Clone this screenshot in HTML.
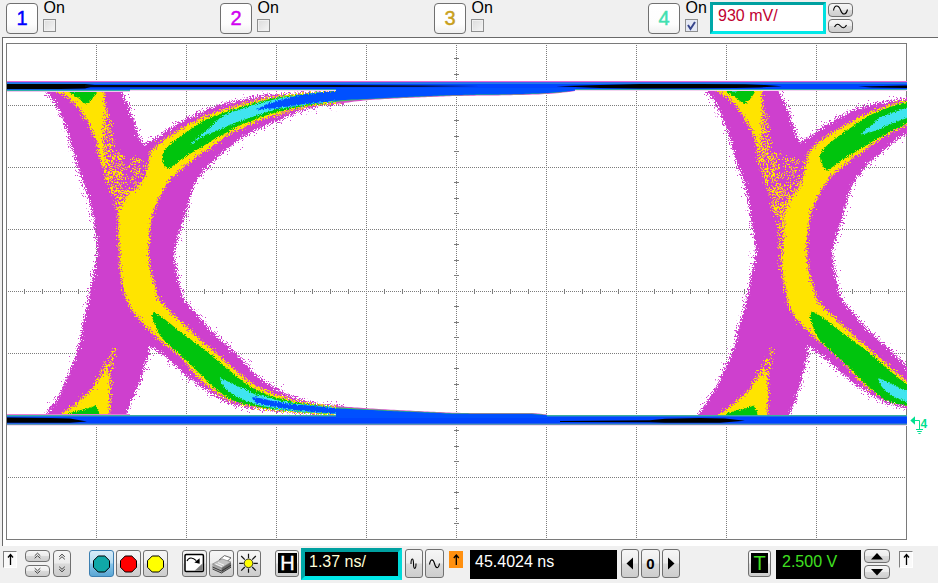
<!DOCTYPE html>
<html lang="en"><head><meta charset="utf-8">
<title>Oscilloscope eye diagram</title>
<style>
html,body{margin:0;padding:0;}
body{width:938px;height:583px;overflow:hidden;background:#f0f0f0;position:relative;
 font-family:"Liberation Sans",sans-serif;color:#000;}
.a{position:absolute;box-sizing:border-box;}
.btn{position:absolute;box-sizing:border-box;border:1px solid #707070;border-radius:3px;
 background:linear-gradient(#f6f6f6 0%,#ececec 48%,#dadada 52%,#cdcdcd 100%);}
.chb{position:absolute;box-sizing:border-box;border:1px solid #707070;border-radius:4px;
 background:linear-gradient(#ffffff 0%,#fdfdfd 70%,#f0f0f0 100%);
 font-size:20px;line-height:28px;text-align:center;width:32px;height:31px;top:3px;-webkit-text-stroke:0.45px currentColor;}
.on{position:absolute;top:-1px;font-size:16px;line-height:18px;}
.cb{position:absolute;box-sizing:border-box;top:19px;width:13px;height:13px;border:1px solid #8e8f8f;
 background:linear-gradient(135deg,#dcdcdc 0%,#e8e8e8 50%,#f6f6f6 100%);box-shadow:inset 0 0 0 1px #f0f0f0;}
.fld{position:absolute;box-sizing:border-box;font-size:16px;white-space:nowrap;}
.sunk{position:absolute;box-sizing:border-box;background:#fafafa;border-top:1px solid #808080;border-left:1px solid #808080;
 border-right:1px solid #fff;border-bottom:1px solid #fff;}
svg{position:absolute;overflow:visible;}
</style></head><body>
<div class="chb" style="left:6px;color:#0000ff">1</div>
<div class="on" style="left:43.5px">On</div>
<div class="cb" style="left:43px"></div>
<div class="chb" style="left:220px;color:#d000f0">2</div>
<div class="on" style="left:257.5px">On</div>
<div class="cb" style="left:257px"></div>
<div class="chb" style="left:434px;color:#c8a020">3</div>
<div class="on" style="left:471.5px">On</div>
<div class="cb" style="left:471px"></div>
<div class="chb" style="left:648px;color:#40e0b0">4</div>
<div class="on" style="left:685.5px">On</div>
<div class="cb" style="left:685px"></div>
<svg style="left:685px;top:19px" width="13" height="13" viewBox="0 0 13 13"><rect x="1" y="1" width="11" height="11" fill="#e4e8f4"/><path d="M3 6 L5.5 10 L10 3" fill="none" stroke="#36458c" stroke-width="2"/></svg>
<div class="fld" style="left:710px;top:2px;width:116px;height:32px;background:#fff;border:3px solid;border-color:#00a0a0 #00e0e0 #00e8e8 #00a8a8;color:#c00030;line-height:22px;padding-left:5px;">930 mV/</div>
<div class="btn" style="left:828px;top:3px;width:25px;height:14px;border-radius:4px"></div>
<div class="btn" style="left:828px;top:19px;width:25px;height:14px;border-radius:4px"></div>
<svg style="left:828px;top:3px" width="25" height="30" viewBox="0 0 25 30"><path d="M5.5 7.5 C6.5 1.5 10.5 1.5 12.5 7 C14.5 12.5 18 12.5 19.5 6.5" fill="none" stroke="#000" stroke-width="1.1"/><path d="M6.5 24 C8.5 20.5 10.5 20.5 12.5 23 C14.5 25.5 17 25.5 18.5 22" fill="none" stroke="#000" stroke-width="1.1"/></svg>
<div class="a" style="left:2px;top:37px;width:936px;height:509px;background:#fff;border-top:1px solid #696969;border-left:1px solid #696969"></div>
<svg style="left:0;top:0" width="938" height="583" viewBox="0 0 938 583"><defs><clipPath id="pc"><rect x="7" y="44" width="900" height="495"/></clipPath><clipPath id="pc2"><rect x="0" y="0" width="344" height="583"/><rect x="600" y="0" width="338" height="583"/></clipPath><filter id="sp" x="0" y="0" width="938" height="583" filterUnits="userSpaceOnUse"><feTurbulence type="fractalNoise" baseFrequency="0.85" numOctaves="1" seed="7" result="n"/><feDisplacementMap in="SourceGraphic" in2="n" scale="13" xChannelSelector="R" yChannelSelector="G"/></filter><filter id="sq" x="0" y="0" width="938" height="583" filterUnits="userSpaceOnUse"><feTurbulence type="fractalNoise" baseFrequency="0.85" numOctaves="1" seed="3" result="n"/><feDisplacementMap in="SourceGraphic" in2="n" scale="5" xChannelSelector="R" yChannelSelector="G"/></filter><filter id="sh" x="0" y="0" width="938" height="583" filterUnits="userSpaceOnUse"><feTurbulence type="fractalNoise" baseFrequency="0.85" numOctaves="1" seed="12" result="n"/><feDisplacementMap in="SourceGraphic" in2="n" scale="28" xChannelSelector="R" yChannelSelector="G"/></filter><pattern id="dy" width="16" height="16" patternUnits="userSpaceOnUse"><path d="M0 0h2v1h-2zM4 0h1v1h-1zM6 0h1v1h-1zM11 0h1v1h-1zM14 0h1v1h-1zM0 1h4v1h-4zM6 1h4v1h-4zM12 1h1v1h-1zM14 1h1v1h-1zM5 2h2v1h-2zM8 2h6v1h-6zM3 3h3v1h-3zM7 3h2v1h-2zM10 3h1v1h-1zM14 3h2v1h-2zM6 4h1v1h-1zM9 4h1v1h-1zM11 4h1v1h-1zM13 4h2v1h-2zM3 5h3v1h-3zM12 5h1v1h-1zM14 5h2v1h-2zM0 6h1v1h-1zM4 6h2v1h-2zM7 6h6v1h-6zM0 7h1v1h-1zM6 7h2v1h-2zM14 7h1v1h-1zM3 8h1v1h-1zM5 8h1v1h-1zM7 8h1v1h-1zM9 8h2v1h-2zM15 8h1v1h-1zM3 9h2v1h-2zM8 9h2v1h-2zM13 9h2v1h-2zM0 10h1v1h-1zM3 10h2v1h-2zM10 10h2v1h-2zM13 10h1v1h-1zM0 11h3v1h-3zM4 11h1v1h-1zM9 11h2v1h-2zM12 11h1v1h-1zM14 11h2v1h-2zM1 12h1v1h-1zM4 12h5v1h-5zM1 13h3v1h-3zM5 13h1v1h-1zM9 13h1v1h-1zM11 13h1v1h-1zM13 13h2v1h-2zM1 14h2v1h-2zM5 14h6v1h-6zM15 14h1v1h-1zM1 15h1v1h-1zM4 15h3v1h-3zM8 15h4v1h-4zM14 15h1v1h-1z" fill="#ffe400"/></pattern><pattern id="dz" width="16" height="16" patternUnits="userSpaceOnUse"><path d="M2 0h1v1h-1zM9 0h2v1h-2zM13 0h1v1h-1zM9 1h2v1h-2zM13 1h3v1h-3zM2 2h1v1h-1zM4 2h1v1h-1zM12 2h1v1h-1zM4 3h3v1h-3zM1 4h1v1h-1zM3 4h1v1h-1zM6 4h2v1h-2zM1 5h1v1h-1zM4 5h1v1h-1zM9 5h1v1h-1zM11 5h1v1h-1zM1 6h1v1h-1zM6 6h2v1h-2zM1 7h1v1h-1zM13 7h1v1h-1zM2 8h1v1h-1zM6 8h1v1h-1zM8 8h1v1h-1zM10 8h2v1h-2zM0 9h1v1h-1zM7 9h1v1h-1zM12 9h1v1h-1zM7 10h1v1h-1zM12 10h1v1h-1zM4 11h1v1h-1zM6 11h1v1h-1zM7 12h1v1h-1zM9 12h3v1h-3zM1 13h1v1h-1zM7 13h1v1h-1zM11 13h2v1h-2zM1 14h1v1h-1zM3 14h2v1h-2zM6 14h1v1h-1zM8 14h1v1h-1zM4 15h1v1h-1zM7 15h2v1h-2zM11 15h1v1h-1z" fill="#ffe400"/></pattern><pattern id="dm" width="16" height="16" patternUnits="userSpaceOnUse"><path d="M0 0h1v1h-1zM3 0h3v1h-3zM7 0h2v1h-2zM10 0h1v1h-1zM13 0h1v1h-1zM11 1h1v1h-1zM1 2h2v1h-2zM13 2h1v1h-1zM1 3h1v1h-1zM5 3h3v1h-3zM9 3h2v1h-2zM15 3h1v1h-1zM1 4h1v1h-1zM3 4h1v1h-1zM8 4h3v1h-3zM4 5h2v1h-2zM8 5h2v1h-2zM11 5h2v1h-2zM15 5h1v1h-1zM1 6h1v1h-1zM4 6h2v1h-2zM8 6h2v1h-2zM12 6h1v1h-1zM4 7h1v1h-1zM8 7h1v1h-1zM12 7h1v1h-1zM14 8h1v1h-1zM2 9h1v1h-1zM4 9h1v1h-1zM9 9h1v1h-1zM11 9h1v1h-1zM3 10h2v1h-2zM9 10h1v1h-1zM13 10h1v1h-1zM3 11h1v1h-1zM5 11h1v1h-1zM7 11h1v1h-1zM11 11h1v1h-1zM3 12h1v1h-1zM6 12h2v1h-2zM9 12h2v1h-2zM14 12h1v1h-1zM0 13h1v1h-1zM3 13h1v1h-1zM6 13h2v1h-2zM14 13h2v1h-2zM1 14h1v1h-1zM3 14h1v1h-1zM6 14h1v1h-1zM12 14h4v1h-4zM0 15h2v1h-2zM3 15h1v1h-1zM7 15h1v1h-1zM9 15h1v1h-1zM12 15h1v1h-1zM14 15h1v1h-1z" fill="#ce40ce"/></pattern></defs><g stroke="#7c7c7c" stroke-width="1" shape-rendering="crispEdges" fill="none"><path d="M96.5 45V539M186.5 45V539M276.5 45V539M366.5 45V539M456.5 45V539M546.5 45V539M636.5 45V539M726.5 45V539M816.5 45V539M8 105.5H906M8 167.5H906M8 229.5H906M8 291.5H906M8 353.5H906M8 415.5H906M8 477.5H906" stroke-dasharray="1 1"/><path d="M24.5 289V294M42.5 289V294M60.5 289V294M78.5 289V294M114.5 289V294M132.5 289V294M150.5 289V294M168.5 289V294M204.5 289V294M222.5 289V294M240.5 289V294M258.5 289V294M294.5 289V294M312.5 289V294M330.5 289V294M348.5 289V294M384.5 289V294M402.5 289V294M420.5 289V294M438.5 289V294M474.5 289V294M492.5 289V294M510.5 289V294M528.5 289V294M564.5 289V294M582.5 289V294M600.5 289V294M618.5 289V294M654.5 289V294M672.5 289V294M690.5 289V294M708.5 289V294M744.5 289V294M762.5 289V294M780.5 289V294M798.5 289V294M834.5 289V294M852.5 289V294M870.5 289V294M888.5 289V294M454 58.5H459M454 74.5H459M454 89.5H459M454 120.5H459M454 136.5H459M454 151.5H459M454 182.5H459M454 198.5H459M454 213.5H459M454 244.5H459M454 260.5H459M454 275.5H459M454 306.5H459M454 322.5H459M454 337.5H459M454 368.5H459M454 384.5H459M454 399.5H459M454 430.5H459M454 446.5H459M454 461.5H459M454 492.5H459M454 508.5H459M454 523.5H459"/></g><rect x="6.5" y="43.5" width="900" height="496" fill="none" stroke="#7a7a7a" stroke-width="1" shape-rendering="crispEdges"/><g clip-path="url(#pc)"><g clip-path="url(#pc2)"><g filter="url(#sh)"><polygon points="45.0,86.0 45.6,89.0 46.6,91.8 48.2,94.3 50.1,96.7 52.2,99.0 54.1,101.4 55.7,104.0 57.1,106.7 58.5,109.4 59.8,112.1 61.0,114.9 62.2,117.7 63.4,120.5 64.5,123.3 65.6,126.1 66.6,129.0 67.5,131.9 68.3,134.8 69.2,137.7 70.0,140.6 70.8,143.5 71.6,146.5 72.4,149.4 73.2,152.3 74.0,155.2 74.9,158.1 75.7,161.1 76.6,164.0 77.5,166.8 78.5,169.7 79.5,172.6 80.5,175.4 81.6,178.3 82.7,181.1 83.8,183.9 84.8,186.7 85.9,189.6 86.8,192.5 87.8,195.3 88.7,198.2 89.6,201.1 90.4,204.1 91.0,207.0 91.6,210.0 92.2,212.9 92.7,215.9 93.3,218.9 93.7,221.9 94.2,224.9 94.7,227.9 95.1,230.9 95.6,233.9 96.2,236.9 96.7,239.9 97.1,242.9 97.4,246.0 97.6,249.0 97.5,252.0 97.3,255.0 96.8,258.0 96.2,260.9 95.6,263.9 95.0,266.9 94.4,269.9 93.9,272.9 93.3,275.9 92.7,278.8 92.1,281.8 91.5,284.8 90.9,287.7 90.3,290.7 89.7,293.7 89.1,296.7 88.5,299.6 87.9,302.6 87.3,305.6 86.7,308.5 86.0,311.5 85.3,314.4 84.6,317.4 84.0,320.3 83.3,323.3 82.8,326.3 82.2,329.3 81.7,332.3 81.2,335.2 80.6,338.2 80.0,341.2 79.3,344.1 78.6,347.1 77.8,350.0 76.9,352.9 75.8,355.7 74.7,358.5 73.5,361.3 72.4,364.2 71.3,367.0 70.2,369.8 69.2,372.7 68.1,375.5 67.0,378.3 65.8,381.1 64.5,383.9 63.2,386.6 61.9,389.3 60.5,392.0 59.1,394.7 57.5,397.3 55.9,399.8 54.2,402.4 52.4,404.8 50.7,407.4 49.1,409.9 47.6,412.5 46.2,415.2 45.0,418.0 45.0,418.0 125.0,418.0 125.0,418.0 125.9,414.9 126.9,411.9 128.1,408.9 129.3,405.9 130.6,403.0 132.0,400.1 133.3,397.2 134.6,394.2 135.8,391.3 137.1,388.3 138.4,385.4 139.5,382.4 140.6,379.4 141.6,376.3 142.6,373.2 143.5,370.2 144.4,367.1 145.3,364.0 146.3,360.9 147.4,357.9 148.3,354.8 148.9,351.7 149.3,348.5 149.5,345.3 149.5,345.3 152.0,347.0 154.5,348.8 157.0,350.6 159.4,352.4 161.9,354.2 164.3,356.1 166.7,358.0 169.0,359.9 171.3,361.9 173.5,364.0 175.7,366.1 177.9,368.2 180.1,370.3 182.4,372.4 184.7,374.4 187.1,376.3 189.5,378.2 191.9,380.0 194.3,381.9 196.8,383.7 199.3,385.5 201.7,387.2 204.2,389.0 206.7,390.8 209.3,392.5 211.8,394.1 214.4,395.7 217.1,397.2 219.8,398.6 222.5,400.0 225.3,401.3 228.1,402.5 231.0,403.5 233.8,404.4 236.8,405.2 239.8,405.9 242.7,406.6 245.7,407.3 248.7,407.9 251.7,408.4 254.7,408.9 257.7,409.3 260.8,409.6 263.8,409.9 266.8,410.2 269.9,410.4 272.9,410.7 276.0,411.0 279.0,411.3 282.0,411.7 285.0,412.0 288.1,412.3 291.1,412.6 294.2,412.8 297.2,413.0 300.2,413.2 303.3,413.4 306.3,413.6 309.4,413.8 312.4,414.0 315.4,414.2 318.5,414.4 321.5,414.6 324.6,414.7 327.6,414.8 330.7,414.9 333.7,415.0 336.8,415.1 339.8,415.2 342.9,415.3 345.9,415.4 349.0,415.4 352.0,415.5 352.0,418.0 547.0,418.0 547.0,414.5 544.0,414.2 541.0,413.8 537.9,413.5 534.9,413.2 531.9,413.0 528.9,413.0 525.9,413.0 522.8,413.0 519.8,413.0 516.8,413.0 513.7,413.0 510.7,413.0 507.7,413.0 504.6,413.0 501.6,413.0 498.6,413.0 495.5,413.0 492.5,413.0 489.5,413.0 486.4,413.0 483.4,413.0 480.4,413.0 477.3,413.0 474.3,413.0 471.3,413.0 468.2,413.0 465.2,413.0 462.2,412.9 459.1,412.9 456.1,412.8 453.1,412.7 450.1,412.6 447.0,412.5 444.0,412.3 441.0,412.2 437.9,412.0 434.9,411.9 431.9,411.7 428.9,411.6 425.8,411.4 422.8,411.3 419.8,411.1 416.7,411.0 413.7,410.9 410.7,410.7 407.7,410.6 404.6,410.4 401.6,410.2 398.6,410.1 395.5,409.9 392.5,409.8 389.5,409.6 386.5,409.4 383.4,409.3 380.4,409.1 377.4,408.9 374.4,408.7 371.3,408.5 368.3,408.4 365.3,408.2 362.3,407.9 359.2,407.7 356.2,407.5 353.2,407.3 350.2,407.1 347.1,406.9 344.1,406.6 341.1,406.4 338.1,406.1 335.1,405.8 332.0,405.5 329.0,405.2 326.0,404.8 323.0,404.4 320.0,403.9 317.0,403.4 314.0,402.8 311.1,402.2 308.1,401.5 305.2,400.8 302.2,400.0 299.3,399.2 296.4,398.3 293.5,397.3 290.7,396.2 288.1,394.7 285.5,393.2 282.8,391.8 280.1,390.4 277.4,389.0 274.7,387.5 272.1,386.0 269.5,384.5 266.9,382.9 264.3,381.3 261.7,379.7 259.2,378.0 256.8,376.2 254.6,374.2 252.6,371.9 250.7,369.5 248.8,367.1 246.8,364.8 244.8,362.6 242.6,360.4 240.5,358.3 238.3,356.2 236.1,354.1 233.9,352.0 231.7,349.9 229.5,347.8 227.3,345.8 225.0,343.7 222.7,341.7 220.5,339.7 218.2,337.7 216.0,335.7 213.8,333.5 211.7,331.4 209.5,329.2 207.5,327.0 205.4,324.8 203.4,322.5 201.4,320.2 199.5,317.9 197.6,315.5 195.7,313.1 193.8,310.8 191.9,308.4 189.8,306.2 187.5,304.0 185.3,301.8 183.8,299.4 182.7,296.8 181.8,294.0 181.0,291.0 180.3,288.0 179.7,284.9 179.0,281.9 178.3,278.9 177.7,276.0 177.0,273.0 176.4,270.0 175.8,267.0 175.3,264.0 174.9,261.1 174.6,258.0 174.3,255.0 174.0,252.0 193.8,185.0 195.5,182.5 197.3,180.1 199.1,177.6 200.9,175.2 202.7,172.8 204.6,170.4 206.5,168.0 208.5,165.8 210.6,163.6 212.7,161.5 214.9,159.4 217.2,157.4 219.5,155.5 221.8,153.6 224.2,151.7 226.5,149.7 228.9,147.8 231.2,145.8 233.5,143.9 235.9,142.0 238.3,140.3 240.8,138.6 243.4,137.0 246.0,135.4 248.6,133.9 251.2,132.4 253.9,131.0 256.6,129.7 259.3,128.3 262.1,127.1 264.9,125.9 267.6,124.7 270.5,123.6 273.3,122.5 276.1,121.5 278.9,120.3 281.7,119.1 284.4,117.8 287.2,116.5 290.0,115.2 292.7,114.0 295.5,112.8 298.3,111.8 301.2,110.8 304.0,109.9 306.9,109.1 309.9,108.3 312.8,107.6 315.8,106.9 318.7,106.3 321.7,105.7 324.7,105.3 327.7,104.9 330.7,104.5 333.7,104.2 336.7,103.8 339.7,103.5 342.7,103.1 345.7,102.7 348.7,102.3 351.7,101.9 354.7,101.5 357.7,101.2 360.7,100.8 363.7,100.5 366.7,100.2 369.7,100.0 372.7,99.8 375.8,99.6 378.8,99.4 381.8,99.2 384.8,99.0 387.8,98.9 390.8,98.7 393.9,98.6 396.9,98.4 399.9,98.3 402.9,98.1 405.9,98.0 409.0,97.8 412.0,97.7 415.0,97.6 418.0,97.5 421.0,97.3 424.1,97.2 427.1,97.1 430.1,97.0 433.1,96.9 436.1,96.7 439.2,96.6 442.2,96.5 445.2,96.4 448.2,96.3 451.3,96.2 454.3,96.1 457.3,96.0 460.3,95.9 463.3,95.9 466.4,95.8 469.4,95.8 472.4,95.7 475.4,95.7 478.5,95.6 481.5,95.6 484.5,95.6 487.5,95.5 490.5,95.5 493.6,95.4 496.6,95.4 499.6,95.4 502.6,95.3 505.7,95.3 508.7,95.2 511.7,95.2 514.7,95.1 517.7,95.1 520.8,95.0 523.8,94.9 526.8,94.8 529.8,94.7 532.9,94.6 535.9,94.5 538.9,94.4 541.9,94.2 544.9,94.1 548.0,93.9 551.0,93.7 554.0,93.5 557.0,93.2 560.0,92.9 563.0,92.6 566.0,92.3 569.0,91.9 572.0,91.5 575.0,91.0 575.0,87.0 335.0,87.0 335.0,90.5 331.9,90.7 328.9,90.9 325.8,91.1 322.8,91.3 319.7,91.5 316.7,91.8 313.6,92.1 310.6,92.4 307.6,92.7 304.5,92.9 301.5,93.2 298.4,93.4 295.4,93.5 292.3,93.7 289.2,93.8 286.2,94.0 283.1,94.1 280.1,94.3 277.0,94.5 274.0,94.8 270.9,95.1 267.9,95.4 264.9,95.8 261.8,96.3 258.8,96.8 255.8,97.4 252.8,98.0 249.8,98.5 246.8,99.1 243.8,99.7 240.8,100.3 237.8,100.9 234.8,101.6 231.8,102.2 228.8,102.9 225.9,103.6 222.9,104.3 220.0,105.2 217.1,106.1 214.2,107.1 211.3,108.2 208.4,109.3 205.6,110.4 202.8,111.6 199.9,112.7 197.1,113.9 194.3,115.2 191.5,116.5 188.8,117.8 186.1,119.3 183.5,120.8 180.8,122.3 178.2,123.9 175.5,125.4 172.9,127.0 170.3,128.6 167.7,130.1 165.1,131.8 162.6,133.6 160.1,135.4 157.6,137.1 155.1,138.8 152.5,140.4 149.8,142.0 147.2,143.5 144.5,145.0 144.5,145.0 142.3,142.6 140.4,140.0 139.1,137.1 138.0,134.1 137.0,131.0 136.0,127.9 134.9,124.8 133.9,121.8 132.9,118.7 131.8,115.7 130.7,112.6 129.5,109.6 128.4,106.6 127.1,103.6 125.7,100.7 124.0,97.9 122.3,95.1 120.9,92.3 120.0,89.2 119.5,86.0" fill="url(#dm)" /><polygon points="705.5,86.0 706.1,89.0 707.1,91.8 708.7,94.3 710.6,96.7 712.7,99.1 714.6,101.5 716.2,104.1 717.6,106.7 719.0,109.5 720.3,112.2 721.5,115.0 722.8,117.8 724.0,120.6 725.1,123.4 726.1,126.3 727.1,129.2 728.0,132.1 728.9,135.0 729.7,137.9 730.6,140.8 731.4,143.8 732.2,146.7 733.0,149.6 733.8,152.6 734.6,155.5 735.4,158.4 736.3,161.3 737.1,164.3 738.1,167.1 739.1,170.0 740.1,172.9 741.2,175.7 742.2,178.6 743.4,181.4 744.6,184.2 745.7,187.1 746.5,190.0 747.0,192.9 747.4,195.9 747.8,199.0 748.1,202.0 748.6,205.0 749.0,208.0 749.6,211.0 750.1,214.0 750.7,217.0 751.3,220.0 751.8,223.0 752.3,226.0 752.8,229.0 753.3,232.0 753.8,235.0 754.4,238.0 754.8,241.1 755.2,244.1 755.5,247.1 755.6,250.1 755.5,253.1 755.1,256.1 754.6,259.1 754.0,262.1 753.3,265.1 752.8,268.1 752.2,271.1 751.7,274.1 751.1,277.1 750.5,280.1 749.8,283.1 749.2,286.0 748.6,289.0 748.0,292.0 747.4,295.0 746.7,297.9 746.1,300.9 745.4,303.9 744.7,306.8 743.9,309.8 743.1,312.7 742.2,315.6 741.3,318.5 740.5,321.5 739.8,324.4 739.1,327.4 738.4,330.3 737.7,333.3 737.0,336.3 736.3,339.2 735.5,342.1 734.6,345.1 733.7,348.0 732.7,350.8 731.6,353.7 730.4,356.5 729.2,359.2 727.9,362.0 726.6,364.7 725.4,367.5 724.2,370.3 723.0,373.1 721.7,375.9 720.5,378.7 719.2,381.4 717.8,384.1 716.3,386.8 714.9,389.5 713.4,392.1 711.8,394.7 710.2,397.3 708.5,399.8 706.8,402.3 705.0,404.8 703.2,407.3 701.6,409.9 700.1,412.5 698.7,415.2 697.5,418.0 697.5,418.0 788.5,418.0 788.5,418.0 789.4,415.0 790.4,412.0 791.4,409.0 792.6,406.1 793.7,403.2 794.9,400.2 796.0,397.3 797.0,394.3 798.1,391.4 799.1,388.4 800.1,385.4 801.0,382.4 801.8,379.3 802.5,376.3 803.2,373.2 803.8,370.1 804.4,367.0 805.0,363.9 805.8,360.9 806.6,357.8 807.2,354.7 807.5,351.6 807.5,348.5 807.5,345.3 807.5,345.3 810.0,347.0 812.5,348.8 815.0,350.6 817.4,352.4 819.9,354.2 822.3,356.1 824.7,358.0 827.0,359.9 829.3,361.9 831.5,364.0 833.7,366.1 835.9,368.2 838.1,370.3 840.4,372.4 842.7,374.4 845.1,376.3 847.5,378.2 849.9,380.0 852.3,381.9 854.8,383.7 857.3,385.5 859.7,387.2 862.2,389.0 864.7,390.8 867.3,392.5 869.8,394.1 872.4,395.7 875.1,397.2 877.8,398.6 880.5,400.0 883.3,401.3 886.1,402.5 889.0,403.5 891.8,404.4 894.8,405.2 897.8,405.9 900.7,406.6 903.7,407.3 906.7,407.9 909.7,408.4 912.7,408.9 915.7,409.3 918.8,409.6 921.8,409.9 924.8,410.2 927.9,410.4 930.9,410.7 934.0,411.0 937.0,411.3 940.0,411.7 943.0,412.0 946.1,412.3 949.1,412.6 952.2,412.8 955.2,413.0 958.2,413.2 961.3,413.4 964.3,413.6 967.4,413.8 970.4,414.0 973.4,414.2 976.5,414.4 979.5,414.6 982.6,414.7 985.6,414.8 988.7,414.9 991.7,415.0 994.8,415.1 997.8,415.2 1000.9,415.3 1003.9,415.4 1007.0,415.4 1010.0,415.5 1010.0,418.0 1205.0,418.0 1205.0,414.5 1202.0,414.2 1199.0,413.8 1195.9,413.5 1192.9,413.2 1189.9,413.0 1186.9,413.0 1183.9,413.0 1180.8,413.0 1177.8,413.0 1174.8,413.0 1171.7,413.0 1168.7,413.0 1165.7,413.0 1162.6,413.0 1159.6,413.0 1156.6,413.0 1153.5,413.0 1150.5,413.0 1147.5,413.0 1144.4,413.0 1141.4,413.0 1138.4,413.0 1135.3,413.0 1132.3,413.0 1129.3,413.0 1126.2,413.0 1123.2,413.0 1120.2,412.9 1117.1,412.9 1114.1,412.8 1111.1,412.7 1108.1,412.6 1105.0,412.5 1102.0,412.3 1099.0,412.2 1095.9,412.0 1092.9,411.9 1089.9,411.7 1086.9,411.6 1083.8,411.4 1080.8,411.3 1077.8,411.1 1074.7,411.0 1071.7,410.9 1068.7,410.7 1065.7,410.6 1062.6,410.4 1059.6,410.2 1056.6,410.1 1053.5,409.9 1050.5,409.8 1047.5,409.6 1044.5,409.4 1041.4,409.3 1038.4,409.1 1035.4,408.9 1032.4,408.7 1029.3,408.5 1026.3,408.4 1023.3,408.2 1020.3,407.9 1017.2,407.7 1014.2,407.5 1011.2,407.3 1008.2,407.1 1005.1,406.9 1002.1,406.6 999.1,406.4 996.1,406.1 993.1,405.8 990.0,405.5 987.0,405.2 984.0,404.8 981.0,404.4 978.0,403.9 975.0,403.4 972.0,402.8 969.1,402.2 966.1,401.5 963.2,400.8 960.2,400.0 957.3,399.2 954.4,398.3 951.5,397.3 948.7,396.2 946.1,394.7 943.5,393.2 940.8,391.8 938.1,390.4 935.4,389.0 932.7,387.5 930.1,386.0 927.5,384.5 924.9,382.9 922.3,381.3 919.7,379.7 917.2,378.0 914.8,376.2 912.6,374.2 910.6,371.9 908.7,369.5 906.8,367.1 904.8,364.8 902.8,362.6 900.6,360.4 898.5,358.3 896.3,356.2 894.1,354.1 891.9,352.0 889.7,349.9 887.5,347.8 885.3,345.8 883.0,343.7 880.7,341.7 878.5,339.7 876.2,337.7 874.0,335.7 871.8,333.5 869.7,331.4 867.5,329.2 865.5,327.0 863.4,324.8 861.4,322.5 859.4,320.2 857.5,317.9 855.6,315.5 853.7,313.1 851.8,310.8 849.9,308.4 847.8,306.2 845.5,304.0 843.3,301.8 841.8,299.4 840.7,296.8 839.8,294.0 839.0,291.0 838.3,288.0 837.7,284.9 837.0,281.9 836.3,278.9 835.7,276.0 835.0,273.0 834.4,270.0 833.8,267.0 833.3,264.0 832.9,261.1 832.6,258.0 832.3,255.0 832.0,252.0 851.8,185.0 853.5,182.5 855.3,180.1 857.1,177.6 858.9,175.2 860.7,172.8 862.6,170.4 864.5,168.0 866.5,165.8 868.6,163.6 870.7,161.5 872.9,159.4 875.2,157.4 877.5,155.5 879.8,153.6 882.2,151.7 884.5,149.7 886.9,147.8 889.2,145.8 891.5,143.9 893.9,142.0 896.3,140.3 898.8,138.6 901.4,137.0 904.0,135.4 906.6,133.9 909.2,132.4 911.9,131.0 914.6,129.7 917.3,128.3 920.1,127.1 922.9,125.9 925.6,124.7 928.5,123.6 931.3,122.5 934.1,121.5 936.9,120.3 939.7,119.1 942.4,117.8 945.2,116.5 948.0,115.2 950.7,114.0 953.5,112.8 956.3,111.8 959.2,110.8 962.0,109.9 964.9,109.1 967.9,108.3 970.8,107.6 973.8,106.9 976.7,106.3 979.7,105.7 982.7,105.3 985.7,104.9 988.7,104.5 991.7,104.2 994.7,103.8 997.7,103.5 1000.7,103.1 1003.7,102.7 1006.7,102.3 1009.7,101.9 1012.7,101.5 1015.7,101.2 1018.7,100.8 1021.7,100.5 1024.7,100.2 1027.7,100.0 1030.7,99.8 1033.8,99.6 1036.8,99.4 1039.8,99.2 1042.8,99.0 1045.8,98.9 1048.8,98.7 1051.9,98.6 1054.9,98.4 1057.9,98.3 1060.9,98.1 1063.9,98.0 1067.0,97.8 1070.0,97.7 1073.0,97.6 1076.0,97.5 1079.0,97.3 1082.1,97.2 1085.1,97.1 1088.1,97.0 1091.1,96.9 1094.1,96.7 1097.2,96.6 1100.2,96.5 1103.2,96.4 1106.2,96.3 1109.3,96.2 1112.3,96.1 1115.3,96.0 1118.3,95.9 1121.3,95.9 1124.4,95.8 1127.4,95.8 1130.4,95.7 1133.4,95.7 1136.5,95.6 1139.5,95.6 1142.5,95.6 1145.5,95.5 1148.5,95.5 1151.6,95.4 1154.6,95.4 1157.6,95.4 1160.6,95.3 1163.7,95.3 1166.7,95.2 1169.7,95.2 1172.7,95.1 1175.7,95.1 1178.8,95.0 1181.8,94.9 1184.8,94.8 1187.8,94.7 1190.9,94.6 1193.9,94.5 1196.9,94.4 1199.9,94.2 1202.9,94.1 1206.0,93.9 1209.0,93.7 1212.0,93.5 1215.0,93.2 1218.0,92.9 1221.0,92.6 1224.0,92.3 1227.0,91.9 1230.0,91.5 1233.0,91.0 1233.0,87.0 993.0,87.0 993.0,90.5 989.9,90.7 986.9,90.9 983.8,91.1 980.7,91.3 977.7,91.5 974.6,91.8 971.5,92.1 968.5,92.4 965.4,92.7 962.3,92.9 959.3,93.2 956.2,93.4 953.1,93.5 950.1,93.7 947.0,93.8 943.9,94.0 940.9,94.2 937.8,94.3 934.7,94.5 931.7,94.8 928.6,95.1 925.5,95.5 922.5,95.9 919.5,96.4 916.4,97.0 913.4,97.5 910.4,98.0 907.3,98.5 904.3,98.9 901.2,99.3 898.2,99.7 895.1,100.1 892.1,100.5 889.0,101.0 886.0,101.4 883.0,101.9 879.9,102.4 876.9,103.0 873.9,103.7 871.0,104.5 868.0,105.4 865.1,106.3 862.1,107.2 859.2,108.2 856.3,109.3 853.5,110.4 850.6,111.6 847.8,112.9 845.1,114.2 842.3,115.6 839.7,117.1 837.0,118.7 834.4,120.3 831.7,121.8 829.0,123.4 826.4,125.0 823.8,126.6 821.2,128.2 818.7,130.0 816.2,131.8 813.7,133.6 811.1,135.3 808.5,136.9 805.9,138.5 803.2,140.0 800.5,141.5 800.5,141.5 798.1,139.4 796.7,136.8 795.7,133.7 794.8,130.5 793.8,127.4 792.8,124.4 791.8,121.3 790.7,118.3 789.7,115.3 788.5,112.3 787.4,109.3 786.3,106.4 785.0,103.4 783.6,100.6 781.9,97.8 780.2,95.0 778.9,92.2 778.0,89.2 777.5,86.0" fill="url(#dm)" /></g><g filter="url(#sp)"><polygon points="45.0,86.0 45.6,89.0 46.6,91.8 48.2,94.3 50.1,96.7 52.2,99.0 54.1,101.4 55.7,104.0 57.1,106.7 58.5,109.4 59.8,112.1 61.0,114.9 62.2,117.7 63.4,120.5 64.5,123.3 65.6,126.1 66.6,129.0 67.5,131.9 68.3,134.8 69.2,137.7 70.0,140.6 70.8,143.5 71.6,146.5 72.4,149.4 73.2,152.3 74.0,155.2 74.9,158.1 75.7,161.1 76.6,164.0 77.5,166.8 78.5,169.7 79.5,172.6 80.5,175.4 81.6,178.3 82.7,181.1 83.8,183.9 84.8,186.7 85.9,189.6 86.8,192.5 87.8,195.3 88.7,198.2 89.6,201.1 90.4,204.1 91.0,207.0 91.6,210.0 92.2,212.9 92.7,215.9 93.3,218.9 93.7,221.9 94.2,224.9 94.7,227.9 95.1,230.9 95.6,233.9 96.2,236.9 96.7,239.9 97.1,242.9 97.4,246.0 97.6,249.0 97.5,252.0 97.3,255.0 96.8,258.0 96.2,260.9 95.6,263.9 95.0,266.9 94.4,269.9 93.9,272.9 93.3,275.9 92.7,278.8 92.1,281.8 91.5,284.8 90.9,287.7 90.3,290.7 89.7,293.7 89.1,296.7 88.5,299.6 87.9,302.6 87.3,305.6 86.7,308.5 86.0,311.5 85.3,314.4 84.6,317.4 84.0,320.3 83.3,323.3 82.8,326.3 82.2,329.3 81.7,332.3 81.2,335.2 80.6,338.2 80.0,341.2 79.3,344.1 78.6,347.1 77.8,350.0 76.9,352.9 75.8,355.7 74.7,358.5 73.5,361.3 72.4,364.2 71.3,367.0 70.2,369.8 69.2,372.7 68.1,375.5 67.0,378.3 65.8,381.1 64.5,383.9 63.2,386.6 61.9,389.3 60.5,392.0 59.1,394.7 57.5,397.3 55.9,399.8 54.2,402.4 52.4,404.8 50.7,407.4 49.1,409.9 47.6,412.5 46.2,415.2 45.0,418.0 45.0,418.0 125.0,418.0 125.0,418.0 125.9,414.9 126.9,411.9 128.1,408.9 129.3,405.9 130.6,403.0 132.0,400.1 133.3,397.2 134.6,394.2 135.8,391.3 137.1,388.3 138.4,385.4 139.5,382.4 140.6,379.4 141.6,376.3 142.6,373.2 143.5,370.2 144.4,367.1 145.3,364.0 146.3,360.9 147.4,357.9 148.3,354.8 148.9,351.7 149.3,348.5 149.5,345.3 149.5,345.3 152.0,347.0 154.5,348.8 157.0,350.6 159.4,352.4 161.9,354.2 164.3,356.1 166.7,358.0 169.0,359.9 171.3,361.9 173.5,364.0 175.7,366.1 177.9,368.2 180.1,370.3 182.4,372.4 184.7,374.4 187.1,376.3 189.5,378.2 191.9,380.0 194.3,381.9 196.8,383.7 199.3,385.5 201.7,387.2 204.2,389.0 206.7,390.8 209.3,392.5 211.8,394.1 214.4,395.7 217.1,397.2 219.8,398.6 222.5,400.0 225.3,401.3 228.1,402.5 231.0,403.5 233.8,404.4 236.8,405.2 239.8,405.9 242.7,406.6 245.7,407.3 248.7,407.9 251.7,408.4 254.7,408.9 257.7,409.3 260.8,409.6 263.8,409.9 266.8,410.2 269.9,410.4 272.9,410.7 276.0,411.0 279.0,411.3 282.0,411.7 285.0,412.0 288.1,412.3 291.1,412.6 294.2,412.8 297.2,413.0 300.2,413.2 303.3,413.4 306.3,413.6 309.4,413.8 312.4,414.0 315.4,414.2 318.5,414.4 321.5,414.6 324.6,414.7 327.6,414.8 330.7,414.9 333.7,415.0 336.8,415.1 339.8,415.2 342.9,415.3 345.9,415.4 349.0,415.4 352.0,415.5 352.0,418.0 547.0,418.0 547.0,414.5 544.0,414.2 541.0,413.8 537.9,413.5 534.9,413.2 531.9,413.0 528.9,413.0 525.9,413.0 522.8,413.0 519.8,413.0 516.8,413.0 513.7,413.0 510.7,413.0 507.7,413.0 504.6,413.0 501.6,413.0 498.6,413.0 495.5,413.0 492.5,413.0 489.5,413.0 486.4,413.0 483.4,413.0 480.4,413.0 477.3,413.0 474.3,413.0 471.3,413.0 468.2,413.0 465.2,413.0 462.2,412.9 459.1,412.9 456.1,412.8 453.1,412.7 450.1,412.6 447.0,412.5 444.0,412.3 441.0,412.2 437.9,412.0 434.9,411.9 431.9,411.7 428.9,411.6 425.8,411.4 422.8,411.3 419.8,411.1 416.7,411.0 413.7,410.9 410.7,410.7 407.7,410.6 404.6,410.4 401.6,410.2 398.6,410.1 395.5,409.9 392.5,409.8 389.5,409.6 386.5,409.4 383.4,409.3 380.4,409.1 377.4,408.9 374.4,408.7 371.3,408.5 368.3,408.4 365.3,408.2 362.3,407.9 359.2,407.7 356.2,407.5 353.2,407.3 350.2,407.1 347.1,406.9 344.1,406.6 341.1,406.4 338.1,406.1 335.1,405.8 332.0,405.5 329.0,405.2 326.0,404.8 323.0,404.4 320.0,403.9 317.0,403.4 314.0,402.8 311.1,402.2 308.1,401.5 305.2,400.8 302.2,400.0 299.3,399.2 296.4,398.3 293.5,397.3 290.7,396.2 288.1,394.7 285.5,393.2 282.8,391.8 280.1,390.4 277.4,389.0 274.7,387.5 272.1,386.0 269.5,384.5 266.9,382.9 264.3,381.3 261.7,379.7 259.2,378.0 256.8,376.2 254.6,374.2 252.6,371.9 250.7,369.5 248.8,367.1 246.8,364.8 244.8,362.6 242.6,360.4 240.5,358.3 238.3,356.2 236.1,354.1 233.9,352.0 231.7,349.9 229.5,347.8 227.3,345.8 225.0,343.7 222.7,341.7 220.5,339.7 218.2,337.7 216.0,335.7 213.8,333.5 211.7,331.4 209.5,329.2 207.5,327.0 205.4,324.8 203.4,322.5 201.4,320.2 199.5,317.9 197.6,315.5 195.7,313.1 193.8,310.8 191.9,308.4 189.8,306.2 187.5,304.0 185.3,301.8 183.8,299.4 182.7,296.8 181.8,294.0 181.0,291.0 180.3,288.0 179.7,284.9 179.0,281.9 178.3,278.9 177.7,276.0 177.0,273.0 176.4,270.0 175.8,267.0 175.3,264.0 174.9,261.1 174.6,258.0 174.3,255.0 174.0,252.0 193.8,185.0 195.5,182.5 197.3,180.1 199.1,177.6 200.9,175.2 202.7,172.8 204.6,170.4 206.5,168.0 208.5,165.8 210.6,163.6 212.7,161.5 214.9,159.4 217.2,157.4 219.5,155.5 221.8,153.6 224.2,151.7 226.5,149.7 228.9,147.8 231.2,145.8 233.5,143.9 235.9,142.0 238.3,140.3 240.8,138.6 243.4,137.0 246.0,135.4 248.6,133.9 251.2,132.4 253.9,131.0 256.6,129.7 259.3,128.3 262.1,127.1 264.9,125.9 267.6,124.7 270.5,123.6 273.3,122.5 276.1,121.5 278.9,120.3 281.7,119.1 284.4,117.8 287.2,116.5 290.0,115.2 292.7,114.0 295.5,112.8 298.3,111.8 301.2,110.8 304.0,109.9 306.9,109.1 309.9,108.3 312.8,107.6 315.8,106.9 318.7,106.3 321.7,105.7 324.7,105.3 327.7,104.9 330.7,104.5 333.7,104.2 336.7,103.8 339.7,103.5 342.7,103.1 345.7,102.7 348.7,102.3 351.7,101.9 354.7,101.5 357.7,101.2 360.7,100.8 363.7,100.5 366.7,100.2 369.7,100.0 372.7,99.8 375.8,99.6 378.8,99.4 381.8,99.2 384.8,99.0 387.8,98.9 390.8,98.7 393.9,98.6 396.9,98.4 399.9,98.3 402.9,98.1 405.9,98.0 409.0,97.8 412.0,97.7 415.0,97.6 418.0,97.5 421.0,97.3 424.1,97.2 427.1,97.1 430.1,97.0 433.1,96.9 436.1,96.7 439.2,96.6 442.2,96.5 445.2,96.4 448.2,96.3 451.3,96.2 454.3,96.1 457.3,96.0 460.3,95.9 463.3,95.9 466.4,95.8 469.4,95.8 472.4,95.7 475.4,95.7 478.5,95.6 481.5,95.6 484.5,95.6 487.5,95.5 490.5,95.5 493.6,95.4 496.6,95.4 499.6,95.4 502.6,95.3 505.7,95.3 508.7,95.2 511.7,95.2 514.7,95.1 517.7,95.1 520.8,95.0 523.8,94.9 526.8,94.8 529.8,94.7 532.9,94.6 535.9,94.5 538.9,94.4 541.9,94.2 544.9,94.1 548.0,93.9 551.0,93.7 554.0,93.5 557.0,93.2 560.0,92.9 563.0,92.6 566.0,92.3 569.0,91.9 572.0,91.5 575.0,91.0 575.0,87.0 335.0,87.0 335.0,90.5 331.9,90.7 328.9,90.9 325.8,91.1 322.8,91.3 319.7,91.5 316.7,91.8 313.6,92.1 310.6,92.4 307.6,92.7 304.5,92.9 301.5,93.2 298.4,93.4 295.4,93.5 292.3,93.7 289.2,93.8 286.2,94.0 283.1,94.1 280.1,94.3 277.0,94.5 274.0,94.8 270.9,95.1 267.9,95.4 264.9,95.8 261.8,96.3 258.8,96.8 255.8,97.4 252.8,98.0 249.8,98.5 246.8,99.1 243.8,99.7 240.8,100.3 237.8,100.9 234.8,101.6 231.8,102.2 228.8,102.9 225.9,103.6 222.9,104.3 220.0,105.2 217.1,106.1 214.2,107.1 211.3,108.2 208.4,109.3 205.6,110.4 202.8,111.6 199.9,112.7 197.1,113.9 194.3,115.2 191.5,116.5 188.8,117.8 186.1,119.3 183.5,120.8 180.8,122.3 178.2,123.9 175.5,125.4 172.9,127.0 170.3,128.6 167.7,130.1 165.1,131.8 162.6,133.6 160.1,135.4 157.6,137.1 155.1,138.8 152.5,140.4 149.8,142.0 147.2,143.5 144.5,145.0 144.5,145.0 142.3,142.6 140.4,140.0 139.1,137.1 138.0,134.1 137.0,131.0 136.0,127.9 134.9,124.8 133.9,121.8 132.9,118.7 131.8,115.7 130.7,112.6 129.5,109.6 128.4,106.6 127.1,103.6 125.7,100.7 124.0,97.9 122.3,95.1 120.9,92.3 120.0,89.2 119.5,86.0" fill="#ce40ce" /><polygon points="705.5,86.0 706.1,89.0 707.1,91.8 708.7,94.3 710.6,96.7 712.7,99.1 714.6,101.5 716.2,104.1 717.6,106.7 719.0,109.5 720.3,112.2 721.5,115.0 722.8,117.8 724.0,120.6 725.1,123.4 726.1,126.3 727.1,129.2 728.0,132.1 728.9,135.0 729.7,137.9 730.6,140.8 731.4,143.8 732.2,146.7 733.0,149.6 733.8,152.6 734.6,155.5 735.4,158.4 736.3,161.3 737.1,164.3 738.1,167.1 739.1,170.0 740.1,172.9 741.2,175.7 742.2,178.6 743.4,181.4 744.6,184.2 745.7,187.1 746.5,190.0 747.0,192.9 747.4,195.9 747.8,199.0 748.1,202.0 748.6,205.0 749.0,208.0 749.6,211.0 750.1,214.0 750.7,217.0 751.3,220.0 751.8,223.0 752.3,226.0 752.8,229.0 753.3,232.0 753.8,235.0 754.4,238.0 754.8,241.1 755.2,244.1 755.5,247.1 755.6,250.1 755.5,253.1 755.1,256.1 754.6,259.1 754.0,262.1 753.3,265.1 752.8,268.1 752.2,271.1 751.7,274.1 751.1,277.1 750.5,280.1 749.8,283.1 749.2,286.0 748.6,289.0 748.0,292.0 747.4,295.0 746.7,297.9 746.1,300.9 745.4,303.9 744.7,306.8 743.9,309.8 743.1,312.7 742.2,315.6 741.3,318.5 740.5,321.5 739.8,324.4 739.1,327.4 738.4,330.3 737.7,333.3 737.0,336.3 736.3,339.2 735.5,342.1 734.6,345.1 733.7,348.0 732.7,350.8 731.6,353.7 730.4,356.5 729.2,359.2 727.9,362.0 726.6,364.7 725.4,367.5 724.2,370.3 723.0,373.1 721.7,375.9 720.5,378.7 719.2,381.4 717.8,384.1 716.3,386.8 714.9,389.5 713.4,392.1 711.8,394.7 710.2,397.3 708.5,399.8 706.8,402.3 705.0,404.8 703.2,407.3 701.6,409.9 700.1,412.5 698.7,415.2 697.5,418.0 697.5,418.0 788.5,418.0 788.5,418.0 789.4,415.0 790.4,412.0 791.4,409.0 792.6,406.1 793.7,403.2 794.9,400.2 796.0,397.3 797.0,394.3 798.1,391.4 799.1,388.4 800.1,385.4 801.0,382.4 801.8,379.3 802.5,376.3 803.2,373.2 803.8,370.1 804.4,367.0 805.0,363.9 805.8,360.9 806.6,357.8 807.2,354.7 807.5,351.6 807.5,348.5 807.5,345.3 807.5,345.3 810.0,347.0 812.5,348.8 815.0,350.6 817.4,352.4 819.9,354.2 822.3,356.1 824.7,358.0 827.0,359.9 829.3,361.9 831.5,364.0 833.7,366.1 835.9,368.2 838.1,370.3 840.4,372.4 842.7,374.4 845.1,376.3 847.5,378.2 849.9,380.0 852.3,381.9 854.8,383.7 857.3,385.5 859.7,387.2 862.2,389.0 864.7,390.8 867.3,392.5 869.8,394.1 872.4,395.7 875.1,397.2 877.8,398.6 880.5,400.0 883.3,401.3 886.1,402.5 889.0,403.5 891.8,404.4 894.8,405.2 897.8,405.9 900.7,406.6 903.7,407.3 906.7,407.9 909.7,408.4 912.7,408.9 915.7,409.3 918.8,409.6 921.8,409.9 924.8,410.2 927.9,410.4 930.9,410.7 934.0,411.0 937.0,411.3 940.0,411.7 943.0,412.0 946.1,412.3 949.1,412.6 952.2,412.8 955.2,413.0 958.2,413.2 961.3,413.4 964.3,413.6 967.4,413.8 970.4,414.0 973.4,414.2 976.5,414.4 979.5,414.6 982.6,414.7 985.6,414.8 988.7,414.9 991.7,415.0 994.8,415.1 997.8,415.2 1000.9,415.3 1003.9,415.4 1007.0,415.4 1010.0,415.5 1010.0,418.0 1205.0,418.0 1205.0,414.5 1202.0,414.2 1199.0,413.8 1195.9,413.5 1192.9,413.2 1189.9,413.0 1186.9,413.0 1183.9,413.0 1180.8,413.0 1177.8,413.0 1174.8,413.0 1171.7,413.0 1168.7,413.0 1165.7,413.0 1162.6,413.0 1159.6,413.0 1156.6,413.0 1153.5,413.0 1150.5,413.0 1147.5,413.0 1144.4,413.0 1141.4,413.0 1138.4,413.0 1135.3,413.0 1132.3,413.0 1129.3,413.0 1126.2,413.0 1123.2,413.0 1120.2,412.9 1117.1,412.9 1114.1,412.8 1111.1,412.7 1108.1,412.6 1105.0,412.5 1102.0,412.3 1099.0,412.2 1095.9,412.0 1092.9,411.9 1089.9,411.7 1086.9,411.6 1083.8,411.4 1080.8,411.3 1077.8,411.1 1074.7,411.0 1071.7,410.9 1068.7,410.7 1065.7,410.6 1062.6,410.4 1059.6,410.2 1056.6,410.1 1053.5,409.9 1050.5,409.8 1047.5,409.6 1044.5,409.4 1041.4,409.3 1038.4,409.1 1035.4,408.9 1032.4,408.7 1029.3,408.5 1026.3,408.4 1023.3,408.2 1020.3,407.9 1017.2,407.7 1014.2,407.5 1011.2,407.3 1008.2,407.1 1005.1,406.9 1002.1,406.6 999.1,406.4 996.1,406.1 993.1,405.8 990.0,405.5 987.0,405.2 984.0,404.8 981.0,404.4 978.0,403.9 975.0,403.4 972.0,402.8 969.1,402.2 966.1,401.5 963.2,400.8 960.2,400.0 957.3,399.2 954.4,398.3 951.5,397.3 948.7,396.2 946.1,394.7 943.5,393.2 940.8,391.8 938.1,390.4 935.4,389.0 932.7,387.5 930.1,386.0 927.5,384.5 924.9,382.9 922.3,381.3 919.7,379.7 917.2,378.0 914.8,376.2 912.6,374.2 910.6,371.9 908.7,369.5 906.8,367.1 904.8,364.8 902.8,362.6 900.6,360.4 898.5,358.3 896.3,356.2 894.1,354.1 891.9,352.0 889.7,349.9 887.5,347.8 885.3,345.8 883.0,343.7 880.7,341.7 878.5,339.7 876.2,337.7 874.0,335.7 871.8,333.5 869.7,331.4 867.5,329.2 865.5,327.0 863.4,324.8 861.4,322.5 859.4,320.2 857.5,317.9 855.6,315.5 853.7,313.1 851.8,310.8 849.9,308.4 847.8,306.2 845.5,304.0 843.3,301.8 841.8,299.4 840.7,296.8 839.8,294.0 839.0,291.0 838.3,288.0 837.7,284.9 837.0,281.9 836.3,278.9 835.7,276.0 835.0,273.0 834.4,270.0 833.8,267.0 833.3,264.0 832.9,261.1 832.6,258.0 832.3,255.0 832.0,252.0 851.8,185.0 853.5,182.5 855.3,180.1 857.1,177.6 858.9,175.2 860.7,172.8 862.6,170.4 864.5,168.0 866.5,165.8 868.6,163.6 870.7,161.5 872.9,159.4 875.2,157.4 877.5,155.5 879.8,153.6 882.2,151.7 884.5,149.7 886.9,147.8 889.2,145.8 891.5,143.9 893.9,142.0 896.3,140.3 898.8,138.6 901.4,137.0 904.0,135.4 906.6,133.9 909.2,132.4 911.9,131.0 914.6,129.7 917.3,128.3 920.1,127.1 922.9,125.9 925.6,124.7 928.5,123.6 931.3,122.5 934.1,121.5 936.9,120.3 939.7,119.1 942.4,117.8 945.2,116.5 948.0,115.2 950.7,114.0 953.5,112.8 956.3,111.8 959.2,110.8 962.0,109.9 964.9,109.1 967.9,108.3 970.8,107.6 973.8,106.9 976.7,106.3 979.7,105.7 982.7,105.3 985.7,104.9 988.7,104.5 991.7,104.2 994.7,103.8 997.7,103.5 1000.7,103.1 1003.7,102.7 1006.7,102.3 1009.7,101.9 1012.7,101.5 1015.7,101.2 1018.7,100.8 1021.7,100.5 1024.7,100.2 1027.7,100.0 1030.7,99.8 1033.8,99.6 1036.8,99.4 1039.8,99.2 1042.8,99.0 1045.8,98.9 1048.8,98.7 1051.9,98.6 1054.9,98.4 1057.9,98.3 1060.9,98.1 1063.9,98.0 1067.0,97.8 1070.0,97.7 1073.0,97.6 1076.0,97.5 1079.0,97.3 1082.1,97.2 1085.1,97.1 1088.1,97.0 1091.1,96.9 1094.1,96.7 1097.2,96.6 1100.2,96.5 1103.2,96.4 1106.2,96.3 1109.3,96.2 1112.3,96.1 1115.3,96.0 1118.3,95.9 1121.3,95.9 1124.4,95.8 1127.4,95.8 1130.4,95.7 1133.4,95.7 1136.5,95.6 1139.5,95.6 1142.5,95.6 1145.5,95.5 1148.5,95.5 1151.6,95.4 1154.6,95.4 1157.6,95.4 1160.6,95.3 1163.7,95.3 1166.7,95.2 1169.7,95.2 1172.7,95.1 1175.7,95.1 1178.8,95.0 1181.8,94.9 1184.8,94.8 1187.8,94.7 1190.9,94.6 1193.9,94.5 1196.9,94.4 1199.9,94.2 1202.9,94.1 1206.0,93.9 1209.0,93.7 1212.0,93.5 1215.0,93.2 1218.0,92.9 1221.0,92.6 1224.0,92.3 1227.0,91.9 1230.0,91.5 1233.0,91.0 1233.0,87.0 993.0,87.0 993.0,90.5 989.9,90.7 986.9,90.9 983.8,91.1 980.7,91.3 977.7,91.5 974.6,91.8 971.5,92.1 968.5,92.4 965.4,92.7 962.3,92.9 959.3,93.2 956.2,93.4 953.1,93.5 950.1,93.7 947.0,93.8 943.9,94.0 940.9,94.2 937.8,94.3 934.7,94.5 931.7,94.8 928.6,95.1 925.5,95.5 922.5,95.9 919.5,96.4 916.4,97.0 913.4,97.5 910.4,98.0 907.3,98.5 904.3,98.9 901.2,99.3 898.2,99.7 895.1,100.1 892.1,100.5 889.0,101.0 886.0,101.4 883.0,101.9 879.9,102.4 876.9,103.0 873.9,103.7 871.0,104.5 868.0,105.4 865.1,106.3 862.1,107.2 859.2,108.2 856.3,109.3 853.5,110.4 850.6,111.6 847.8,112.9 845.1,114.2 842.3,115.6 839.7,117.1 837.0,118.7 834.4,120.3 831.7,121.8 829.0,123.4 826.4,125.0 823.8,126.6 821.2,128.2 818.7,130.0 816.2,131.8 813.7,133.6 811.1,135.3 808.5,136.9 805.9,138.5 803.2,140.0 800.5,141.5 800.5,141.5 798.1,139.4 796.7,136.8 795.7,133.7 794.8,130.5 793.8,127.4 792.8,124.4 791.8,121.3 790.7,118.3 789.7,115.3 788.5,112.3 787.4,109.3 786.3,106.4 785.0,103.4 783.6,100.6 781.9,97.8 780.2,95.0 778.9,92.2 778.0,89.2 777.5,86.0" fill="#ce40ce" /><polygon points="335.0,91.0 332.0,91.2 328.9,91.4 325.9,91.6 322.8,91.9 319.8,92.1 316.7,92.4 313.7,92.7 310.7,92.9 307.6,93.2 304.6,93.5 301.6,93.8 298.5,94.1 295.5,94.4 292.4,94.7 289.4,95.0 286.4,95.3 283.3,95.7 280.3,96.0 277.3,96.4 274.3,96.9 271.3,97.4 268.3,97.9 265.3,98.5 262.3,99.2 259.3,99.9 256.4,100.6 253.4,101.4 250.4,102.1 247.5,102.8 244.5,103.6 241.6,104.4 238.6,105.2 235.7,106.1 232.8,106.9 229.9,107.8 227.0,108.7 224.0,109.7 221.1,110.6 218.3,111.6 215.4,112.5 212.5,113.5 209.6,114.6 206.8,115.7 203.9,116.8 201.2,118.1 198.4,119.4 195.7,120.7 192.9,122.1 190.2,123.6 187.6,125.0 184.9,126.5 182.3,128.1 179.6,129.6 177.1,131.2 174.5,132.8 171.9,134.5 169.3,136.1 166.8,137.8 164.3,139.6 161.8,141.4 159.4,143.3 157.1,145.3 154.8,147.3 152.7,149.5 150.6,151.7 150.6,151.7 149.9,154.7 149.2,157.7 148.6,160.7 148.0,163.8 147.5,166.8 146.9,169.9 146.0,172.8 144.9,175.7 143.6,178.6 142.1,181.3 140.4,183.8 138.5,186.1 136.2,188.3 133.8,190.4 131.3,192.4 129.0,194.5 127.0,196.8 125.4,199.2 123.8,201.9 122.2,204.7 120.8,207.6 119.6,210.5 118.8,213.5 118.4,216.5 118.4,219.5 118.4,222.6 118.4,225.7 118.4,228.8 118.4,231.9 118.4,235.1 118.5,238.1 118.7,241.2 119.0,244.3 119.3,247.4 119.5,250.4 119.7,253.5 119.7,256.6 119.8,259.7 119.8,262.8 119.9,265.9 120.0,269.0 120.3,272.0 120.7,275.1 121.2,278.2 121.9,281.2 122.6,284.2 123.2,287.2 124.0,290.2 124.8,293.2 125.7,296.2 126.7,299.2 127.8,302.1 129.0,304.8 130.4,307.5 132.0,310.1 133.8,312.7 135.7,315.1 137.7,317.6 139.7,319.9 141.8,322.2 143.9,324.5 146.0,326.7 148.3,328.8 150.6,330.9 150.6,330.9 152.7,333.2 154.8,335.4 156.9,337.5 159.1,339.6 161.4,341.6 163.7,343.6 166.1,345.5 168.6,347.3 171.0,349.2 173.4,351.1 175.8,352.9 178.2,354.8 180.5,356.8 182.7,358.9 184.6,361.2 186.5,363.6 188.4,366.0 190.3,368.4 192.3,370.7 194.3,373.1 196.3,375.4 198.4,377.6 200.5,379.7 202.8,381.7 205.1,383.7 207.6,385.5 210.0,387.4 212.5,389.1 215.0,390.9 217.6,392.6 220.1,394.3 222.7,396.0 225.3,397.6 227.9,399.1 230.7,400.4 233.5,401.4 236.4,402.3 239.4,403.0 242.3,403.8 245.3,404.6 248.2,405.3 251.2,406.0 254.2,406.7 257.2,407.2 260.2,407.7 263.2,408.2 266.2,408.7 269.2,409.1 272.2,409.5 275.3,409.9 278.3,410.3 281.3,410.7 284.3,411.1 287.4,411.4 290.4,411.7 293.4,412.0 296.5,412.2 299.5,412.4 302.5,412.6 305.6,412.8 308.6,413.0 311.7,413.2 314.7,413.4 317.7,413.7 320.8,413.8 323.8,414.0 326.9,414.1 329.9,414.3 333.0,414.4 336.0,414.5 336.0,406.9 333.0,406.6 329.9,406.3 326.9,405.9 323.9,405.5 320.9,405.1 317.9,404.7 314.8,404.3 311.8,403.8 308.8,403.3 305.8,402.8 302.8,402.4 299.7,401.9 296.7,401.4 293.7,400.9 290.8,400.1 288.0,398.9 285.2,397.7 282.3,396.8 279.4,395.9 276.5,395.0 273.6,394.0 270.8,392.8 268.0,391.7 265.2,390.5 262.4,389.2 259.7,387.9 257.0,386.4 254.4,384.9 251.8,383.2 249.3,381.5 246.8,379.7 244.4,377.8 242.1,375.9 239.7,374.0 237.4,372.0 235.1,370.0 232.8,368.0 230.5,366.0 228.2,364.0 225.9,362.0 223.6,360.0 221.3,358.0 219.0,356.0 216.7,354.0 214.4,352.0 212.1,350.0 209.8,348.0 207.5,346.0 205.2,344.0 202.9,342.0 200.6,340.0 198.4,337.9 196.2,335.8 194.0,333.7 191.7,331.7 189.5,329.6 187.2,327.6 184.9,325.6 182.6,323.6 180.4,321.5 178.2,319.4 176.0,317.3 173.8,315.1 171.7,312.9 169.6,310.8 167.4,308.6 165.3,306.5 163.1,304.3 161.0,302.2 158.8,300.0 158.8,300.0 158.0,297.0 157.2,294.0 156.4,291.0 155.6,288.0 154.7,284.9 153.8,281.9 152.9,278.9 152.0,275.9 151.3,272.9 150.6,269.9 150.2,266.8 149.7,263.7 149.3,260.6 149.0,257.5 148.8,254.4 148.7,251.3 148.7,248.2 148.8,245.1 149.0,241.9 149.1,238.8 149.3,235.7 149.5,232.6 149.8,229.5 150.2,226.4 150.7,223.3 151.2,220.2 151.8,217.2 152.5,214.2 153.5,211.2 154.7,208.3 155.9,205.4 157.3,202.6 158.6,199.7 159.9,196.9 161.3,194.1 162.8,191.4 164.3,188.7 165.8,185.9 167.4,183.3 169.1,180.6 169.1,180.6 171.2,178.3 173.4,176.2 175.6,174.0 177.9,172.0 180.3,170.1 182.7,168.2 185.1,166.3 187.5,164.4 189.9,162.4 192.3,160.5 194.7,158.6 197.1,156.7 199.6,154.9 202.2,153.2 204.7,151.4 207.2,149.7 209.7,147.9 212.2,146.1 214.8,144.4 217.3,142.6 219.8,140.8 222.3,139.1 224.9,137.3 227.4,135.7 230.1,134.1 232.7,132.6 235.4,131.1 238.2,129.7 241.0,128.4 243.8,127.2 246.6,126.0 249.5,124.8 252.3,123.7 255.1,122.5 258.0,121.3 260.8,120.1 263.7,119.0 266.6,117.9 269.5,116.9 272.4,116.0 275.4,115.2 278.3,114.3 281.3,113.4 284.2,112.5 287.1,111.6 290.1,110.7 293.0,109.8 296.0,109.0 299.0,108.2 302.0,107.6 305.0,107.0 308.0,106.4 311.0,105.8 314.0,105.3 317.1,104.8 320.1,104.4 323.2,104.0 326.2,103.6 329.3,103.3 332.3,102.9 335.4,102.6 338.5,102.3 341.5,102.0 344.6,101.7 347.6,101.5 350.7,101.2 353.8,100.9 356.8,100.6 359.9,100.3 362.9,100.1 366.0,99.8" fill="#ffe400" /><polygon points="56.0,86.0 56.7,89.3 57.9,91.7 60.2,93.4 63.2,94.8 66.3,96.3 69.0,98.1 71.3,100.1 73.6,102.3 75.7,104.7 77.7,107.0 79.6,109.5 81.4,112.1 83.2,114.7 84.8,117.4 86.3,120.1 87.8,122.8 89.3,125.6 90.7,128.4 92.1,131.2 93.4,134.0 94.8,136.8 96.1,139.7 97.0,142.6 97.7,145.7 98.2,148.8 98.6,151.9 99.2,155.0 99.9,158.0 100.7,161.0 101.5,164.0 102.5,167.0 103.5,170.0 103.5,170.0 104.0,166.9 104.3,163.7 104.4,160.6 104.5,157.5 104.4,154.4 103.9,151.3 103.3,148.2 102.9,145.1 102.8,142.0 102.6,138.9 102.5,135.8 102.5,132.6 102.7,129.5 103.2,126.4 103.7,123.3 104.1,120.2 104.7,117.1 105.3,114.1 105.5,111.0 105.3,107.9 105.1,104.7 104.8,101.6 104.7,98.5 104.5,95.4 104.4,92.2 104.2,89.1 104.0,86.0" fill="#ffe400" /><polygon points="59.0,418.0 60.4,414.9 62.4,412.7 65.1,411.0 68.2,409.4 71.0,407.7 73.6,405.7 76.0,403.5 78.4,401.3 80.9,399.1 83.4,397.0 86.0,395.0 88.4,392.8 90.7,390.5 92.8,388.0 94.8,385.4 96.8,382.9 98.9,380.3 101.0,377.8 103.2,375.4 105.5,373.2 108.0,371.0 108.0,371.0 108.4,374.3 108.8,377.7 109.1,381.0 109.4,384.4 109.6,387.7 109.8,391.1 109.9,394.5 109.9,397.8 109.8,401.2 109.6,404.5 109.5,407.9 109.3,411.3 109.3,414.6 109.3,418.0" fill="#ffe400" /><polygon points="993.0,91.0 989.9,91.2 986.9,91.4 983.8,91.7 980.8,91.9 977.7,92.1 974.7,92.4 971.6,92.7 968.6,93.1 965.6,93.4 962.5,93.6 959.5,93.9 956.4,94.0 953.4,94.2 950.3,94.3 947.2,94.4 944.2,94.5 941.1,94.6 938.1,94.8 935.0,94.9 932.0,95.2 928.9,95.6 925.9,96.0 922.9,96.6 919.9,97.2 916.9,97.9 913.9,98.7 911.0,99.5 908.0,100.2 905.0,100.9 902.1,101.7 899.1,102.5 896.2,103.3 893.2,104.2 890.3,105.1 887.4,106.0 884.5,107.0 881.6,108.0 878.7,109.0 875.9,110.1 873.0,111.3 870.2,112.5 867.4,113.7 864.6,115.0 861.9,116.3 859.1,117.6 856.4,119.0 853.7,120.5 851.0,122.0 848.3,123.5 845.7,125.0 843.0,126.5 840.4,128.0 837.7,129.6 835.1,131.2 832.5,132.8 829.9,134.4 827.4,136.1 824.8,137.8 822.4,139.6 819.9,141.4 817.5,143.3 815.1,145.2 812.9,147.3 810.7,149.5 808.6,151.7 808.6,151.7 807.9,154.7 807.2,157.7 806.6,160.8 806.0,163.8 805.4,166.9 804.8,169.9 804.1,172.9 803.3,175.9 802.4,178.9 801.4,181.8 800.2,184.6 798.6,187.2 796.9,189.8 795.0,192.4 793.3,195.0 791.7,197.6 790.3,200.4 788.9,203.2 787.5,206.1 786.2,209.0 785.2,212.0 784.5,214.9 784.4,217.9 784.4,221.0 784.4,224.1 784.4,227.2 784.4,230.3 784.4,233.4 784.4,236.5 784.3,239.6 784.0,242.7 783.8,245.8 783.5,248.9 783.2,252.0 782.9,255.1 782.6,258.1 782.4,261.2 782.1,264.3 782.0,267.4 782.1,270.5 782.4,273.5 782.8,276.6 783.4,279.7 784.1,282.7 784.7,285.8 785.2,288.8 785.8,291.9 786.3,295.0 786.8,298.1 787.5,301.1 788.2,304.1 789.1,306.9 790.4,309.7 792.0,312.3 793.9,314.9 795.8,317.5 797.7,319.9 799.7,322.2 801.7,324.5 803.9,326.7 806.2,328.9 808.6,330.9 808.6,330.9 810.7,333.2 812.8,335.4 814.9,337.5 817.1,339.6 819.4,341.6 821.7,343.6 824.1,345.5 826.6,347.3 829.0,349.2 831.4,351.1 833.8,352.9 836.2,354.8 838.5,356.8 840.7,358.9 842.6,361.2 844.5,363.6 846.4,366.0 848.3,368.4 850.3,370.7 852.3,373.1 854.3,375.4 856.4,377.6 858.5,379.7 860.8,381.7 863.1,383.7 865.6,385.5 868.0,387.4 870.5,389.1 873.0,390.9 875.6,392.6 878.1,394.3 880.7,396.0 883.3,397.6 885.9,399.1 888.7,400.4 891.5,401.4 894.4,402.3 897.4,403.0 900.3,403.8 903.3,404.6 906.2,405.3 909.2,406.0 912.2,406.7 915.2,407.2 918.2,407.7 921.2,408.2 924.2,408.7 927.2,409.1 930.2,409.5 933.3,409.9 936.3,410.3 939.3,410.7 942.3,411.1 945.4,411.4 948.4,411.7 951.4,412.0 954.5,412.2 957.5,412.4 960.5,412.6 963.6,412.8 966.6,413.0 969.7,413.2 972.7,413.4 975.7,413.7 978.8,413.8 981.8,414.0 984.9,414.1 987.9,414.3 991.0,414.4 994.0,414.5 994.0,406.9 991.0,406.6 987.9,406.3 984.9,405.9 981.9,405.5 978.9,405.1 975.9,404.7 972.8,404.3 969.8,403.8 966.8,403.3 963.8,402.8 960.8,402.4 957.7,401.9 954.7,401.4 951.7,400.9 948.8,400.1 946.0,398.9 943.2,397.7 940.3,396.8 937.4,395.9 934.5,395.0 931.6,394.0 928.8,392.8 926.0,391.7 923.2,390.5 920.4,389.2 917.7,387.9 915.0,386.4 912.4,384.9 909.8,383.2 907.3,381.5 904.8,379.7 902.4,377.8 900.1,375.9 897.7,374.0 895.4,372.0 893.1,370.0 890.8,368.0 888.5,366.0 886.2,364.0 883.9,362.0 881.6,360.0 879.3,358.0 877.0,356.0 874.7,354.0 872.4,352.0 870.1,350.0 867.8,348.0 865.5,346.0 863.2,344.0 860.9,342.0 858.6,340.0 856.4,337.9 854.2,335.8 852.0,333.7 849.7,331.7 847.5,329.6 845.2,327.6 842.9,325.6 840.6,323.6 838.4,321.5 836.2,319.4 834.0,317.3 831.8,315.1 829.7,312.9 827.6,310.8 825.4,308.6 823.3,306.5 821.1,304.3 819.0,302.2 816.8,300.0 816.8,300.0 816.0,297.0 815.2,294.0 814.4,291.0 813.6,288.0 812.7,284.9 811.8,281.9 810.9,278.9 810.0,275.9 809.3,272.9 808.6,269.9 808.2,266.8 807.7,263.7 807.3,260.6 807.0,257.5 806.8,254.4 806.7,251.3 806.7,248.2 806.8,245.1 807.0,241.9 807.1,238.8 807.3,235.7 807.5,232.6 807.8,229.5 808.2,226.4 808.7,223.3 809.2,220.2 809.8,217.2 810.5,214.2 811.5,211.2 812.7,208.3 813.9,205.4 815.3,202.6 816.6,199.7 817.9,196.9 819.3,194.1 820.8,191.4 822.3,188.7 823.8,185.9 825.4,183.3 827.1,180.6 827.1,180.6 829.2,178.3 831.4,176.2 833.6,174.0 835.9,172.0 838.3,170.1 840.7,168.2 843.1,166.3 845.5,164.4 847.9,162.4 850.3,160.5 852.7,158.6 855.1,156.7 857.6,154.9 860.2,153.2 862.7,151.4 865.2,149.7 867.7,147.9 870.2,146.1 872.8,144.4 875.3,142.6 877.8,140.8 880.3,139.1 882.9,137.3 885.4,135.7 888.1,134.1 890.7,132.6 893.4,131.1 896.2,129.7 899.0,128.4 901.8,127.2 904.6,126.0 907.5,124.8 910.3,123.7 913.1,122.5 916.0,121.3 918.8,120.1 921.7,119.0 924.6,117.9 927.5,116.9 930.4,116.0 933.4,115.2 936.3,114.3 939.3,113.4 942.2,112.5 945.1,111.6 948.1,110.7 951.0,109.8 954.0,109.0 957.0,108.2 960.0,107.6 963.0,107.0 966.0,106.4 969.0,105.8 972.0,105.3 975.1,104.8 978.1,104.4 981.2,104.0 984.2,103.6 987.3,103.3 990.3,102.9 993.4,102.6 996.5,102.3 999.5,102.0 1002.6,101.7 1005.6,101.5 1008.7,101.2 1011.8,100.9 1014.8,100.6 1017.9,100.3 1020.9,100.1 1024.0,99.8" fill="#ffe400" /><polygon points="716.0,86.0 716.8,89.2 718.1,91.6 720.4,93.4 723.4,94.9 726.4,96.5 728.9,98.4 731.2,100.5 733.4,102.8 735.5,105.1 737.5,107.5 739.3,110.0 741.1,112.7 742.7,115.3 744.4,118.0 745.9,120.7 747.4,123.4 748.9,126.2 750.3,129.0 751.7,131.8 753.0,134.6 754.4,137.4 755.7,140.3 756.9,143.1 758.0,146.1 759.1,149.0 760.0,152.0 760.0,152.0 760.2,148.9 760.4,145.7 760.5,142.6 760.5,139.4 760.5,136.3 760.5,133.1 760.6,130.0 760.9,126.8 761.2,123.7 761.5,120.6 761.9,117.4 762.3,114.3 762.5,111.2 762.4,108.0 762.3,104.9 762.2,101.7 762.1,98.6 762.0,95.4 761.9,92.3 761.7,89.1 761.5,86.0" fill="#ffe400" /><polygon points="717.0,418.0 718.4,414.9 720.4,412.7 723.1,411.0 726.2,409.4 729.0,407.7 731.6,405.7 734.0,403.5 736.4,401.3 738.9,399.1 741.4,397.0 744.0,395.0 746.4,392.8 748.7,390.5 750.8,388.0 752.8,385.4 754.8,382.9 756.9,380.3 759.0,377.8 761.2,375.4 763.5,373.2 766.0,371.0 766.0,371.0 766.4,374.3 766.8,377.7 767.1,381.0 767.4,384.4 767.6,387.7 767.8,391.1 767.9,394.5 767.9,397.8 767.8,401.2 767.6,404.5 767.5,407.9 767.3,411.3 767.3,414.6 767.3,418.0" fill="#ffe400" /><polygon points="105.5,108.0 107.0,110.8 108.4,113.7 109.6,116.6 110.5,119.6 111.2,122.7 111.9,125.8 112.5,129.0 112.9,132.2 113.1,135.3 113.2,138.5 113.3,141.7 113.4,144.8 113.7,148.0 113.9,151.2 114.3,154.3 114.7,157.5 115.1,160.6 115.7,163.8 116.3,166.9 117.0,170.0 117.8,173.0 118.9,176.1 120.0,179.1 121.4,182.0 122.8,184.7 124.5,187.2 126.5,189.6 128.8,191.9 131.3,194.0 134.0,196.0 134.0,196.0 133.4,199.5 132.5,202.7 131.2,205.6 129.8,208.3 128.1,210.7 126.3,212.8 123.4,215.0 120.5,216.6 118.5,216.9 117.2,215.4 116.2,212.7 115.3,209.1 114.4,205.2 113.5,201.6 112.5,198.5 111.4,195.6 110.4,192.7 109.3,189.8 108.3,186.9 107.3,183.9 106.4,181.0 105.4,178.0 104.5,175.1 103.6,172.1 102.8,169.1 102.0,166.1 101.0,163.1 100.2,160.1 99.6,157.1 99.5,154.0 99.5,150.9 99.6,147.8 99.8,144.7 99.9,141.6 100.1,138.5 100.4,135.5 100.9,132.4 101.4,129.3 102.0,126.3 102.6,123.2 103.1,120.2 103.7,117.1 104.3,114.1 104.9,111.0 105.5,108.0" fill="url(#dy)" /><polygon points="92.0,384.0 94.0,381.2 96.0,378.4 97.9,375.6 99.8,372.7 101.7,369.9 103.4,366.9 105.2,364.0 106.8,361.0 108.5,358.0 110.1,355.0 111.8,352.0 113.5,349.0 116.0,349.0 115.5,352.3 114.9,355.5 114.4,358.8 113.9,362.1 113.4,365.4 112.9,368.6 112.4,371.9 112.0,375.2 111.6,378.5 111.4,381.8 111.2,385.1 111.1,388.4 111.0,391.7 111.0,395.0 107.0,395.0 104.6,392.0 101.8,389.4 98.9,387.2 95.6,385.4 92.0,384.0" fill="url(#dy)" /><polygon points="762.5,108.0 764.0,110.8 765.4,113.7 766.6,116.7 767.4,119.7 768.2,122.7 768.8,125.9 769.4,129.0 769.8,132.2 770.2,135.3 770.4,138.5 770.6,141.7 770.9,144.8 771.3,148.0 771.7,151.1 772.2,154.3 772.7,157.4 773.2,160.6 773.7,163.7 774.3,166.9 775.0,169.9 775.8,173.0 776.8,176.1 778.0,179.1 779.4,182.0 780.8,184.7 782.5,187.2 784.5,189.6 786.8,191.9 789.3,194.0 792.0,196.0 792.0,196.0 791.7,200.2 791.0,204.0 790.0,207.4 788.6,210.1 787.0,212.3 785.3,213.8 782.8,214.8 779.2,215.6 776.2,216.0 774.8,215.3 773.6,213.1 772.7,209.9 771.9,206.0 771.1,202.1 770.2,198.6 769.2,195.6 768.2,192.7 767.2,189.7 766.2,186.8 765.2,183.8 764.3,180.8 763.3,177.8 762.4,174.9 761.5,171.9 760.6,168.9 759.7,165.9 758.9,162.9 758.1,159.8 757.3,156.8 756.6,153.7 756.1,150.7 755.7,147.6 755.3,144.4 755.0,141.3 755.1,138.3 755.8,135.3 756.8,132.3 758.1,129.4 759.4,126.4 760.4,123.5 761.1,120.4 761.6,117.4 762.0,114.3 762.3,111.1 762.5,108.0" fill="url(#dy)" /><polygon points="785.3,198.5 783.5,201.4 781.8,204.4 780.3,207.4 779.1,210.4 778.3,213.5 777.9,216.6 777.9,219.8 777.9,223.0 777.9,226.2 777.9,229.5 777.9,232.8 777.9,236.1 778.0,239.3 778.3,242.5 778.6,245.8 778.9,249.0 779.1,252.3 779.2,255.5 779.3,258.8 779.4,262.0 779.5,265.2 779.5,268.5 788.0,268.5 788.0,265.2 787.9,262.0 787.8,258.8 787.7,255.5 787.6,252.3 787.4,249.0 787.1,245.8 786.8,242.5 786.5,239.3 786.4,236.1 786.4,232.8 786.4,229.5 786.4,226.2 786.4,223.0 786.4,219.8 786.4,216.6 786.8,213.5 787.6,210.4 788.8,207.4 790.3,204.4 792.0,201.4 793.8,198.5" fill="url(#dy)" /><polygon points="750.0,384.0 752.0,381.2 754.0,378.4 755.9,375.6 757.8,372.7 759.7,369.9 761.4,366.9 763.2,364.0 764.8,361.0 766.5,358.0 768.1,355.0 769.8,352.0 771.5,349.0 774.0,349.0 773.5,352.3 772.9,355.5 772.4,358.8 771.9,362.1 771.4,365.4 770.9,368.6 770.4,371.9 770.0,375.2 769.6,378.5 769.4,381.8 769.2,385.1 769.1,388.4 769.0,391.7 769.0,395.0 765.0,395.0 762.6,392.0 759.8,389.4 756.9,387.2 753.6,385.4 750.0,384.0" fill="url(#dy)" /><polygon points="114.0,150.0 117.3,151.4 120.6,152.8 123.9,154.0 127.3,155.2 130.6,156.2 134.1,157.1 137.5,158.0 141.0,158.7 144.5,159.4 148.0,160.0 148.0,160.0 147.8,163.3 147.4,166.6 146.8,169.7 146.1,172.8 144.9,175.8 143.3,178.7 141.7,181.6 140.2,184.5 138.7,187.4 137.2,190.3 135.6,193.2 134.0,196.0 134.0,196.0 131.3,194.0 128.7,191.8 126.4,189.5 124.4,187.0 122.7,184.5 121.2,181.7 119.8,178.7 118.6,175.6 117.6,172.4 116.8,169.3 116.2,166.2 115.5,163.0 115.0,159.8 114.5,156.6 114.2,153.3 114.0,150.0" fill="url(#dz)" /><polygon points="772.0,150.0 775.3,151.4 778.6,152.8 781.9,154.0 785.3,155.2 788.6,156.2 792.1,157.1 795.5,158.0 799.0,158.7 802.5,159.4 806.0,160.0 806.0,160.0 805.8,163.3 805.4,166.6 804.8,169.7 804.1,172.8 802.9,175.8 801.3,178.7 799.7,181.6 798.2,184.5 796.7,187.4 795.2,190.3 793.6,193.2 792.0,196.0 792.0,196.0 789.3,194.0 786.7,191.8 784.4,189.5 782.4,187.0 780.7,184.5 779.2,181.7 777.8,178.7 776.6,175.6 775.6,172.4 774.8,169.3 774.2,166.2 773.5,163.0 773.0,159.8 772.5,156.6 772.2,153.3 772.0,150.0" fill="url(#dz)" /></g><g filter="url(#sq)"><polygon points="335.0,91.2 331.9,91.4 328.9,91.6 325.8,91.8 322.7,92.1 319.7,92.4 316.6,92.6 313.5,93.0 310.5,93.3 307.4,93.6 304.4,94.0 301.3,94.3 298.3,94.7 295.2,95.1 292.2,95.5 289.1,95.9 286.1,96.3 283.0,96.7 280.0,97.2 276.9,97.6 273.9,98.2 270.9,98.8 267.9,99.5 264.9,100.2 261.9,101.0 258.9,101.8 256.0,102.6 253.0,103.4 250.1,104.3 247.1,105.1 244.2,106.0 241.2,106.9 238.3,107.9 235.4,108.8 232.4,109.7 229.5,110.7 226.6,111.7 223.7,112.7 220.8,113.7 217.9,114.8 215.0,115.8 212.1,116.9 209.3,118.1 206.5,119.3 203.8,120.7 201.1,122.3 198.5,124.0 195.9,125.6 193.3,127.3 190.8,129.0 188.2,130.8 185.7,132.5 183.2,134.3 180.7,136.1 178.2,137.9 175.8,139.8 173.4,141.7 170.9,143.7 168.6,145.8 166.6,148.0 164.8,150.4 163.2,153.1 161.9,155.9 161.9,155.9 162.3,160.0 163.3,163.4 165.7,166.5 169.1,169.2 169.1,169.2 171.4,167.1 173.8,165.1 176.2,163.2 178.6,161.4 181.1,159.6 183.7,157.8 186.3,156.1 188.9,154.5 191.5,152.9 194.2,151.3 196.8,149.7 199.5,148.2 202.1,146.6 204.8,145.0 207.4,143.4 210.0,141.8 212.7,140.1 215.3,138.5 218.0,137.0 220.7,135.5 223.4,134.1 226.2,132.7 228.9,131.2 231.5,129.6 234.2,128.1 237.0,126.7 239.8,125.5 242.6,124.3 245.5,123.2 248.4,122.1 251.3,121.0 254.2,119.9 257.0,118.7 259.9,117.6 262.8,116.6 265.7,115.6 268.7,114.6 271.6,113.7 274.6,112.9 277.6,112.1 280.6,111.3 283.5,110.5 286.5,109.7 289.5,109.0 292.5,108.2 295.5,107.6 298.6,106.9 301.6,106.4 304.6,105.9 307.7,105.4 310.7,104.9 313.8,104.5 316.9,104.1 319.9,103.7 323.0,103.3 326.0,102.9 329.1,102.6 332.2,102.2 335.2,101.9 338.3,101.5 341.4,101.3 344.4,101.0 347.5,100.7 350.6,100.5 353.7,100.3 356.8,100.0 359.8,99.8 362.9,99.7 366.0,99.5" fill="#04c408" /><polygon points="336.0,407.2 333.0,406.9 329.9,406.6 326.9,406.3 323.8,406.0 320.8,405.7 317.7,405.3 314.7,405.0 311.6,404.6 308.6,404.2 305.6,403.8 302.5,403.5 299.4,403.1 296.4,402.7 293.4,402.2 290.5,401.5 287.6,400.3 284.7,399.4 281.7,398.8 278.7,398.3 275.7,397.6 272.8,396.7 270.0,395.6 267.1,394.4 264.3,393.3 261.4,392.1 258.5,391.0 255.7,389.8 253.1,388.3 250.6,386.6 248.1,384.8 245.5,383.1 243.0,381.4 240.5,379.6 238.1,377.8 235.7,375.8 233.4,373.7 231.1,371.7 228.8,369.7 226.5,367.7 224.2,365.7 221.9,363.7 219.6,361.7 217.2,359.7 214.9,357.7 212.5,355.8 210.1,353.9 207.6,352.1 205.2,350.2 202.8,348.4 200.3,346.5 197.9,344.7 195.4,342.9 192.9,341.1 190.4,339.3 188.0,337.5 185.5,335.7 183.1,333.8 180.6,332.0 178.2,330.1 175.8,328.2 173.4,326.3 171.1,324.3 168.7,322.4 166.3,320.5 163.9,318.6 161.4,316.9 158.9,315.1 156.3,313.4 153.7,311.8 153.7,311.8 151.8,316.6 153.7,321.5 153.7,321.5 154.7,324.6 155.8,327.5 157.2,330.3 158.6,332.9 160.2,335.5 161.9,337.9 163.9,340.1 166.2,342.2 168.5,344.3 170.8,346.4 173.1,348.5 175.3,350.5 177.6,352.6 179.9,354.6 182.2,356.7 184.4,358.7 186.7,360.8 189.0,362.9 191.2,365.0 193.3,367.2 195.5,369.3 197.6,371.5 199.8,373.7 202.0,375.8 204.2,378.0 206.3,380.2 208.5,382.3 210.8,384.4 213.0,386.5 215.4,388.4 217.7,390.4 220.1,392.3 222.6,394.2 225.1,396.0 227.7,397.7 230.3,399.1 233.1,400.4 236.0,401.4 238.9,402.3 241.9,403.2 244.8,403.9 247.8,404.6 250.8,405.3 253.8,405.9 256.8,406.5 259.8,407.0 262.8,407.5 265.9,408.0 268.9,408.5 271.9,408.9 275.0,409.4 278.0,409.8 281.0,410.2 284.1,410.5 287.1,410.9 290.2,411.2 293.2,411.5 296.3,411.7 299.3,412.0 302.4,412.2 305.4,412.4 308.5,412.6 311.5,412.8 314.6,413.0 317.7,413.2 320.7,413.4 323.8,413.6 326.8,413.8 329.9,413.9 332.9,414.1 336.0,414.2" fill="#04c408" /><polygon points="67.0,86.0 67.8,89.3 69.2,91.9 71.8,93.9 74.8,95.7 77.5,97.6 80.1,99.6 82.7,101.6 85.3,103.7 88.1,102.7 90.7,100.4 92.9,98.0 94.9,95.3 96.6,92.4 97.0,89.3 97.0,86.0" fill="#04c408" /><polygon points="67.0,418.0 68.0,414.6 70.0,412.9 73.3,411.9 76.8,411.0 80.0,410.1 83.2,409.4 86.4,408.6 89.6,407.8 92.7,406.8 95.4,405.5 97.3,408.5 98.8,411.5 99.4,414.7 99.4,418.0" fill="#04c408" /><polygon points="993.0,91.2 989.9,91.4 986.8,91.6 983.7,91.8 980.7,92.1 977.6,92.4 974.5,92.7 971.4,93.1 968.4,93.4 965.3,93.8 962.2,94.1 959.2,94.4 956.1,94.6 953.0,94.7 949.9,94.8 946.8,94.9 943.7,95.0 940.6,95.2 937.5,95.3 934.5,95.5 931.4,95.8 928.3,96.3 925.3,96.8 922.3,97.5 919.3,98.2 916.3,99.1 913.3,99.9 910.3,100.8 907.4,101.7 904.4,102.5 901.4,103.4 898.5,104.3 895.5,105.3 892.6,106.3 889.7,107.2 886.8,108.3 883.8,109.3 881.0,110.4 878.1,111.6 875.3,112.8 872.5,114.1 869.7,115.5 866.9,116.9 864.2,118.4 861.6,120.0 859.1,121.8 856.6,123.6 854.0,125.4 851.5,127.2 848.9,128.9 846.4,130.6 843.9,132.4 841.3,134.2 838.8,136.0 836.3,137.8 833.9,139.7 831.4,141.7 829.0,143.7 826.7,145.7 824.6,148.0 822.8,150.4 821.3,153.0 819.9,155.9 819.9,155.9 820.4,160.2 821.5,164.0 823.8,167.6 827.1,170.7 827.1,170.7 829.6,168.9 832.1,167.2 834.6,165.4 837.0,163.7 839.5,161.9 842.0,160.1 844.5,158.4 847.1,156.8 849.7,155.3 852.4,153.7 855.0,152.2 857.6,150.6 860.2,149.0 862.8,147.4 865.4,145.9 868.0,144.3 870.6,142.7 873.2,141.1 875.8,139.6 878.5,138.1 881.3,136.7 884.0,135.3 886.6,133.8 889.3,132.3 891.9,130.8 894.6,129.4 897.3,128.0 900.1,126.7 902.8,125.4 905.6,124.1 908.3,122.8 911.1,121.5 913.8,120.1 916.6,118.8 919.3,117.5 922.1,116.3 925.0,115.2 927.8,114.2 930.8,113.4 933.7,112.6 936.7,111.8 939.6,111.0 942.6,110.2 945.5,109.5 948.5,108.7 951.4,108.0 954.4,107.4 957.4,106.8 960.4,106.2 963.4,105.7 966.4,105.3 969.4,104.8 972.4,104.4 975.5,104.0 978.5,103.6 981.5,103.2 984.5,102.9 987.6,102.5 990.6,102.1 993.6,101.8 996.7,101.5 999.7,101.2 1002.7,101.0 1005.8,100.7 1008.8,100.5 1011.8,100.2 1014.9,100.0 1017.9,99.8 1021.0,99.7 1024.0,99.5" fill="#04c408" /><polygon points="994.0,407.2 990.9,406.9 987.9,406.6 984.8,406.3 981.8,406.0 978.8,405.7 975.7,405.3 972.7,405.0 969.6,404.6 966.6,404.2 963.5,403.8 960.5,403.5 957.4,403.1 954.4,402.7 951.4,402.2 948.4,401.5 945.6,400.3 942.7,399.4 939.7,398.8 936.6,398.3 933.7,397.6 930.8,396.6 927.9,395.5 925.1,394.2 922.3,392.9 919.5,391.7 916.7,390.4 913.9,389.1 911.3,387.5 908.9,385.7 906.4,383.8 904.0,382.0 901.5,380.2 899.0,378.4 896.6,376.5 894.3,374.4 892.1,372.4 889.8,370.3 887.5,368.3 885.2,366.3 882.9,364.2 880.6,362.2 878.3,360.2 875.9,358.2 873.6,356.3 871.2,354.4 868.8,352.5 866.3,350.6 863.9,348.7 861.5,346.9 859.0,345.1 856.5,343.2 854.1,341.4 851.6,339.6 849.1,337.8 846.6,336.0 844.2,334.2 841.7,332.3 839.3,330.5 836.9,328.6 834.5,326.7 832.1,324.8 829.7,322.8 827.3,320.9 824.9,318.9 822.5,317.2 819.9,315.6 817.2,314.0 814.5,312.6 811.7,311.3 811.7,311.3 809.8,316.8 811.7,322.5 811.7,322.5 812.5,325.6 813.5,328.6 814.7,331.5 816.1,334.2 817.5,336.8 819.1,339.3 821.0,341.6 823.1,343.8 825.5,345.9 827.9,348.0 830.1,350.1 832.4,352.1 834.6,354.2 836.9,356.3 839.2,358.3 841.5,360.4 843.8,362.4 846.1,364.5 848.3,366.6 850.5,368.8 852.6,371.0 854.8,373.2 856.9,375.4 859.1,377.5 861.3,379.7 863.5,381.9 865.7,384.0 867.9,386.2 870.2,388.2 872.5,390.2 874.9,392.1 877.3,394.1 879.8,396.0 882.3,397.8 884.9,399.5 887.6,400.9 890.4,402.0 893.3,402.9 896.3,403.7 899.3,404.3 902.3,404.9 905.4,405.4 908.4,405.9 911.5,406.3 914.5,406.7 917.5,407.2 920.6,407.6 923.6,408.1 926.7,408.5 929.7,408.9 932.8,409.3 935.8,409.7 938.9,410.1 941.9,410.5 945.0,410.8 948.0,411.2 951.1,411.5 954.1,411.7 957.2,411.9 960.3,412.2 963.3,412.4 966.4,412.6 969.5,412.8 972.5,413.0 975.6,413.2 978.7,413.4 981.7,413.6 984.8,413.8 987.9,413.9 990.9,414.1 994.0,414.2" fill="#04c408" /><polygon points="725.0,86.0 725.8,89.3 727.2,91.9 729.8,93.9 732.8,95.7 735.5,97.6 738.1,99.6 740.7,101.6 743.3,103.7 746.1,102.7 748.7,100.4 750.9,98.0 752.9,95.3 754.6,92.4 755.0,89.3 755.0,86.0" fill="#04c408" /><polygon points="725.0,418.0 726.0,414.6 728.0,412.9 731.3,411.9 734.8,411.0 738.0,410.1 741.2,409.4 744.4,408.6 747.6,407.8 750.7,406.8 753.4,405.5 755.3,408.5 756.8,411.5 757.4,414.7 757.4,418.0" fill="#04c408" /><polygon points="321.4,92.3 318.3,92.6 315.2,93.0 312.1,93.3 309.0,93.7 306.0,94.1 302.9,94.5 299.8,95.0 296.7,95.4 293.7,95.9 290.6,96.4 287.5,96.9 284.4,97.5 281.4,98.0 278.3,98.6 275.3,99.2 272.3,100.0 269.3,100.7 266.2,101.5 263.2,102.3 260.2,103.0 257.2,103.8 254.2,104.7 251.2,105.5 248.3,106.4 245.3,107.4 242.3,108.4 239.4,109.4 236.5,110.4 233.5,111.5 230.6,112.6 227.6,113.8 224.8,115.0 222.1,116.5 219.6,118.2 217.4,120.4 215.2,122.7 212.9,124.8 210.6,126.8 208.2,128.8 205.8,130.8 203.5,132.8 201.1,134.9 198.7,136.9 196.4,138.9 194.0,141.0 191.7,143.0 191.7,144.6 194.1,142.5 196.5,140.5 199.1,138.7 201.7,137.1 204.4,135.6 207.2,134.3 210.1,133.2 213.0,132.2 215.9,131.1 218.8,129.9 221.7,128.8 224.6,127.6 227.4,126.3 230.2,125.0 233.1,123.7 236.0,122.5 238.9,121.5 241.8,120.4 244.7,119.5 247.7,118.5 250.7,117.5 253.6,116.6 256.6,115.6 259.5,114.6 262.4,113.6 265.4,112.6 268.4,111.7 271.3,110.7 274.3,109.8 277.3,109.1 280.3,108.5 283.4,108.0 286.5,107.5 289.6,107.1 292.6,106.6 295.7,106.2 298.8,105.8 301.9,105.4 305.0,104.9 308.0,104.5 311.1,104.1 314.2,103.7 317.3,103.3 320.4,102.9 323.5,102.6 326.5,102.2 329.6,101.9 332.7,101.5 335.8,101.2 338.9,100.9 342.0,100.6" fill="#40e4f0" /><polygon points="336.0,407.6 332.9,407.3 329.8,407.0 326.7,406.7 323.6,406.5 320.5,406.2 317.4,405.9 314.3,405.5 311.3,405.2 308.2,404.9 305.1,404.6 301.9,404.4 298.8,404.1 295.7,403.9 292.7,403.5 289.7,402.8 286.7,401.8 283.7,401.2 280.6,400.7 277.5,400.2 274.5,399.5 271.5,398.6 268.6,397.6 265.6,396.6 262.7,395.8 259.6,395.1 256.5,394.6 253.6,393.7 250.9,392.3 248.1,390.7 245.3,389.4 242.4,388.3 239.5,387.1 236.7,385.7 233.9,384.3 231.1,383.0 228.3,381.7 225.5,380.4 222.7,379.1 219.8,377.9 219.8,377.9 220.8,381.0 222.1,383.9 223.6,386.5 225.5,388.8 227.9,390.9 230.4,392.8 232.9,394.6 235.6,396.3 238.3,397.9 241.1,399.1 244.0,400.2 247.0,401.2 249.9,402.3 252.8,403.5 255.8,404.4 258.8,405.2 261.8,405.9 264.8,406.5 267.9,407.1 271.0,407.6 274.1,408.2 277.1,408.7 280.2,409.2 283.3,409.7 286.4,410.2 289.4,410.6 292.5,410.9 295.6,411.2 298.7,411.5 301.8,411.8 304.9,412.0 308.0,412.3 311.1,412.5 314.2,412.7 317.4,412.9 320.5,413.1 323.6,413.3 326.7,413.5 329.8,413.7 332.9,413.8 336.0,414.0" fill="#40e4f0" /><polygon points="70.0,86.0 71.0,89.8 74.5,91.8 78.6,91.6 82.0,89.8 83.0,86.0" fill="#40e4f0" /><polygon points="979.4,92.3 976.3,92.6 973.3,92.9 970.2,93.2 967.2,93.6 964.1,94.0 961.1,94.5 958.1,94.9 955.0,95.5 952.0,96.0 949.0,96.7 946.0,97.4 943.0,98.1 940.0,98.8 937.0,99.5 934.1,100.3 931.1,101.1 928.1,101.9 925.2,102.8 922.2,103.5 919.2,104.3 916.3,105.1 913.3,105.9 910.3,106.7 907.4,107.6 904.5,108.5 901.5,109.5 898.6,110.5 895.7,111.5 892.8,112.5 889.9,113.6 887.0,114.6 884.1,115.8 881.3,117.1 878.7,118.6 876.4,120.5 874.2,122.7 871.9,124.8 869.6,126.8 867.2,128.7 864.8,130.7 862.4,132.6 860.0,134.5 860.0,134.5 863.1,134.0 866.1,133.4 869.1,132.6 872.0,131.8 874.9,130.8 877.8,129.6 880.6,128.4 883.5,127.2 886.3,125.9 889.1,124.6 891.9,123.4 894.8,122.2 897.6,121.2 900.6,120.2 903.5,119.2 906.4,118.3 909.4,117.3 912.3,116.3 915.2,115.3 918.1,114.4 921.1,113.4 924.0,112.4 926.9,111.5 929.9,110.5 932.8,109.7 935.8,109.0 938.8,108.4 941.9,107.9 944.9,107.4 948.0,107.0 951.0,106.6 954.1,106.2 957.2,105.7 960.2,105.3 963.3,104.9 966.3,104.5 969.4,104.1 972.4,103.7 975.5,103.3 978.5,102.9 981.6,102.5 984.7,102.2 987.7,101.9 990.8,101.5 993.9,101.2 996.9,100.9 1000.0,100.6" fill="#40e4f0" /><polygon points="994.0,407.6 990.9,407.3 987.8,407.0 984.7,406.7 981.6,406.5 978.5,406.2 975.4,405.9 972.3,405.5 969.3,405.2 966.2,404.9 963.1,404.6 959.9,404.4 956.8,404.1 953.7,403.9 950.7,403.5 947.7,402.8 944.7,401.8 941.7,401.2 938.6,400.7 935.5,400.2 932.5,399.5 929.5,398.6 926.6,397.6 923.6,396.6 920.7,395.8 917.6,395.1 914.5,394.6 911.6,393.7 908.9,392.3 906.1,390.7 903.3,389.4 900.4,388.3 897.5,387.1 894.7,385.7 891.9,384.3 889.1,383.0 886.3,381.7 883.5,380.4 880.7,379.1 877.8,377.9 877.8,377.9 878.8,381.0 880.1,383.9 881.6,386.5 883.5,388.8 885.9,390.9 888.4,392.8 890.9,394.6 893.6,396.3 896.3,397.9 899.1,399.1 902.0,400.2 905.0,401.2 907.9,402.3 910.8,403.5 913.8,404.4 916.8,405.2 919.8,405.9 922.8,406.5 925.9,407.1 929.0,407.6 932.1,408.2 935.1,408.7 938.2,409.2 941.3,409.7 944.4,410.2 947.4,410.6 950.5,410.9 953.6,411.2 956.7,411.5 959.8,411.8 962.9,412.0 966.0,412.3 969.1,412.5 972.2,412.7 975.4,412.9 978.5,413.1 981.6,413.3 984.7,413.5 987.8,413.7 990.9,413.8 994.0,414.0" fill="#40e4f0" /><polygon points="728.0,86.0 729.0,89.8 732.5,91.8 736.6,91.6 740.0,89.8 741.0,86.0" fill="#40e4f0" /><polygon points="335.0,91.2 331.9,91.4 328.7,91.7 325.6,92.0 322.5,92.3 319.4,92.6 316.2,92.9 313.1,93.3 310.0,93.7 306.9,94.1 303.8,94.5 300.7,95.0 297.6,95.6 294.5,96.2 291.5,96.9 288.4,97.7 285.4,98.5 282.3,99.3 279.3,100.2 276.3,101.1 273.3,102.1 270.4,103.1 267.4,104.3 264.5,105.5 261.7,106.8 258.8,108.1 256.0,109.5 256.0,109.5 259.0,109.4 262.1,109.2 265.1,109.1 268.2,108.8 271.2,108.6 274.2,108.2 277.2,107.9 280.3,107.5 283.3,107.1 286.3,106.7 289.3,106.3 292.3,105.8 295.4,105.4 298.4,105.0 301.4,104.6 304.4,104.3 307.4,103.9 310.5,103.5 313.5,103.1 316.5,102.8 319.5,102.4 322.6,102.1 325.6,101.7 328.6,101.4 331.6,101.0 334.7,100.7 337.7,100.4 340.7,100.2 343.8,100.0 346.8,99.8 349.9,99.7 352.9,99.5 355.9,99.4 359.0,99.3 362.0,99.2 365.1,99.0 368.1,98.9 371.2,98.7 374.2,98.6 377.2,98.4 380.3,98.3 383.3,98.1 386.4,97.9 389.4,97.8 392.5,97.6 395.5,97.5 398.5,97.3 401.6,97.2 404.6,97.1 407.7,96.9 410.7,96.8 413.8,96.7 416.8,96.5 419.8,96.4 422.9,96.3 425.9,96.1 429.0,96.0 432.0,95.9 435.1,95.8 438.1,95.6 441.1,95.5 444.2,95.4 447.2,95.3 450.3,95.2 453.3,95.1 456.4,95.0 459.4,94.9 462.4,94.9 465.5,94.8 468.5,94.8 471.6,94.7 474.6,94.7 477.7,94.6 480.7,94.6 483.8,94.6 486.8,94.5 489.9,94.5 492.9,94.4 495.9,94.4 499.0,94.4 502.0,94.3 505.1,94.3 508.1,94.2 511.2,94.2 514.2,94.1 517.3,94.1 520.3,94.0 523.4,93.9 526.4,93.8 529.4,93.7 532.5,93.6 535.5,93.5 538.6,93.4 541.6,93.2 544.7,93.1 547.7,92.9 550.7,92.7 553.8,92.5 556.8,92.3 559.9,92.0 562.9,91.8 565.9,91.5 568.9,91.2 572.0,90.9 575.0,90.5 575.0,88.0 335.0,88.0" fill="#0050ff" /><polygon points="547.0,415.3 544.0,415.0 540.9,414.7 537.9,414.4 534.8,414.2 531.8,414.0 528.7,414.0 525.7,414.0 522.6,414.0 519.5,413.9 516.5,413.9 513.4,413.9 510.4,413.9 507.3,413.9 504.3,413.9 501.2,413.9 498.1,413.9 495.1,413.9 492.0,413.9 489.0,413.9 485.9,413.9 482.8,413.9 479.8,413.9 476.7,413.9 473.7,413.9 470.6,413.9 467.5,413.8 464.5,413.8 461.4,413.8 458.4,413.8 455.3,413.8 452.3,413.7 449.2,413.6 446.2,413.5 443.1,413.3 440.0,413.2 437.0,413.0 433.9,412.8 430.9,412.7 427.8,412.5 424.8,412.4 421.7,412.3 418.7,412.2 415.6,412.0 412.6,411.9 409.5,411.8 406.4,411.7 403.4,411.6 400.3,411.4 397.3,411.3 394.2,411.2 391.2,411.0 388.1,410.9 385.1,410.7 382.0,410.6 379.0,410.4 375.9,410.3 372.8,410.1 369.8,410.0 366.7,409.8 363.7,409.7 360.6,409.6 357.6,409.4 354.5,409.3 351.5,409.2 348.4,409.1 345.3,408.9 342.3,408.8 339.2,408.6 336.2,408.4 333.1,408.2 330.1,407.8 327.1,407.5 324.0,407.1 321.0,406.8 318.0,406.4 314.9,406.1 311.9,405.8 308.8,405.6 305.8,405.3 302.7,405.1 299.7,404.9 296.6,404.8 293.6,404.5 290.5,404.2 287.6,403.4 284.6,402.9 281.5,402.5 278.5,402.1 275.5,401.6 272.5,401.0 269.5,400.3 266.5,399.5 263.6,398.8 260.6,398.2 257.6,397.7 254.5,397.2 251.5,396.8 251.5,396.8 253.2,399.8 255.1,402.1 257.5,403.2 260.3,404.1 263.4,404.8 266.7,405.4 270.1,405.9 273.4,406.4 276.6,407.0 279.7,407.7 282.8,408.4 285.9,409.1 289.0,409.6 292.1,410.1 295.2,410.5 298.4,410.8 301.5,411.1 304.7,411.3 307.8,411.6 311.0,411.8 314.1,412.0 317.3,412.3 320.5,412.5 323.6,412.7 326.8,412.9 329.9,413.2 333.1,413.4 336.2,413.6 339.4,413.8 342.5,414.0 345.7,414.2 348.8,414.3 352.0,414.5 547.0,418.0 352.0,418.0" fill="#0050ff" /><polygon points="993.0,91.2 989.9,91.4 986.7,91.7 983.6,92.0 980.5,92.3 977.4,92.6 974.2,92.9 971.1,93.3 968.0,93.7 964.9,94.1 961.8,94.5 958.7,95.0 955.6,95.6 952.5,96.2 949.5,96.9 946.4,97.7 943.4,98.5 940.3,99.3 937.3,100.2 934.3,101.1 931.3,102.1 928.4,103.1 925.4,104.3 922.5,105.5 919.7,106.8 916.8,108.1 914.0,109.5 914.0,109.5 917.0,109.4 920.1,109.2 923.1,109.1 926.2,108.8 929.2,108.6 932.2,108.2 935.2,107.9 938.3,107.5 941.3,107.1 944.3,106.7 947.3,106.3 950.3,105.8 953.4,105.4 956.4,105.0 959.4,104.6 962.4,104.3 965.4,103.9 968.5,103.5 971.5,103.1 974.5,102.8 977.5,102.4 980.6,102.1 983.6,101.7 986.6,101.4 989.6,101.0 992.7,100.7 995.7,100.4 998.7,100.2 1001.8,100.0 1004.8,99.8 1007.9,99.7 1010.9,99.5 1013.9,99.4 1017.0,99.3 1020.0,99.2 1023.1,99.0 1026.1,98.9 1029.2,98.7 1032.2,98.6 1035.2,98.4 1038.3,98.3 1041.3,98.1 1044.4,97.9 1047.4,97.8 1050.5,97.6 1053.5,97.5 1056.5,97.3 1059.6,97.2 1062.6,97.1 1065.7,96.9 1068.7,96.8 1071.8,96.7 1074.8,96.5 1077.8,96.4 1080.9,96.3 1083.9,96.1 1087.0,96.0 1090.0,95.9 1093.1,95.8 1096.1,95.6 1099.1,95.5 1102.2,95.4 1105.2,95.3 1108.3,95.2 1111.3,95.1 1114.4,95.0 1117.4,94.9 1120.4,94.9 1123.5,94.8 1126.5,94.8 1129.6,94.7 1132.6,94.7 1135.7,94.6 1138.7,94.6 1141.8,94.6 1144.8,94.5 1147.9,94.5 1150.9,94.4 1153.9,94.4 1157.0,94.4 1160.0,94.3 1163.1,94.3 1166.1,94.2 1169.2,94.2 1172.2,94.1 1175.3,94.1 1178.3,94.0 1181.4,93.9 1184.4,93.8 1187.4,93.7 1190.5,93.6 1193.5,93.5 1196.6,93.4 1199.6,93.2 1202.7,93.1 1205.7,92.9 1208.7,92.7 1211.8,92.5 1214.8,92.3 1217.9,92.0 1220.9,91.8 1223.9,91.5 1226.9,91.2 1230.0,90.9 1233.0,90.5 1233.0,88.0 993.0,88.0" fill="#0050ff" /><polygon points="1205.0,415.3 1202.0,415.0 1198.9,414.7 1195.9,414.4 1192.8,414.2 1189.8,414.0 1186.7,414.0 1183.7,414.0 1180.6,414.0 1177.5,413.9 1174.5,413.9 1171.4,413.9 1168.4,413.9 1165.3,413.9 1162.3,413.9 1159.2,413.9 1156.1,413.9 1153.1,413.9 1150.0,413.9 1147.0,413.9 1143.9,413.9 1140.8,413.9 1137.8,413.9 1134.7,413.9 1131.7,413.9 1128.6,413.9 1125.5,413.8 1122.5,413.8 1119.4,413.8 1116.4,413.8 1113.3,413.8 1110.3,413.7 1107.2,413.6 1104.2,413.5 1101.1,413.3 1098.0,413.2 1095.0,413.0 1091.9,412.8 1088.9,412.7 1085.8,412.5 1082.8,412.4 1079.7,412.3 1076.7,412.2 1073.6,412.0 1070.6,411.9 1067.5,411.8 1064.4,411.7 1061.4,411.6 1058.3,411.4 1055.3,411.3 1052.2,411.2 1049.2,411.0 1046.1,410.9 1043.1,410.7 1040.0,410.6 1037.0,410.4 1033.9,410.3 1030.8,410.1 1027.8,410.0 1024.7,409.8 1021.7,409.7 1018.6,409.6 1015.6,409.4 1012.5,409.3 1009.5,409.2 1006.4,409.1 1003.3,408.9 1000.3,408.8 997.2,408.6 994.2,408.4 991.1,408.2 988.1,407.8 985.1,407.5 982.0,407.1 979.0,406.8 976.0,406.4 972.9,406.1 969.9,405.8 966.8,405.6 963.8,405.3 960.7,405.1 957.7,404.9 954.6,404.8 951.6,404.5 948.5,404.2 945.6,403.4 942.6,402.9 939.5,402.5 936.5,402.1 933.5,401.6 930.5,401.0 927.5,400.3 924.5,399.5 921.6,398.8 918.6,398.2 915.6,397.7 912.5,397.2 909.5,396.8 909.5,396.8 911.2,399.8 913.1,402.1 915.5,403.2 918.3,404.1 921.4,404.8 924.7,405.4 928.1,405.9 931.4,406.4 934.6,407.0 937.7,407.7 940.8,408.4 943.9,409.1 947.0,409.6 950.1,410.1 953.2,410.5 956.4,410.8 959.5,411.1 962.7,411.3 965.8,411.6 969.0,411.8 972.1,412.0 975.3,412.3 978.5,412.5 981.6,412.7 984.8,412.9 987.9,413.2 991.1,413.4 994.2,413.6 997.4,413.8 1000.5,414.0 1003.7,414.2 1006.8,414.3 1010.0,414.5 1205.0,418.0 1010.0,418.0" fill="#0050ff" /></g></g><rect x="7" y="81" width="900" height="1" fill="#e868d8"/><rect x="7" y="82" width="900" height="1" fill="#3868e8"/><rect x="7" y="83" width="900" height="1" fill="#1c80e8"/><rect x="7" y="84" width="900" height="5" fill="#0044ff"/><rect x="7" y="89" width="900" height="1" fill="#30a8b0"/><rect x="7" y="90" width="900" height="1" fill="#f4d4f0"/><rect x="7" y="89" width="123" height="1" fill="#1060e0"/><rect x="7" y="90" width="123" height="1" fill="#30b0a8"/><rect x="7" y="91" width="123" height="1" fill="#f0c4ee"/><polygon points="7,84 85,84 97,85.3 85,88.6 60,89 7,89" fill="#000"/><polygon points="85,85 330,85 420,85.4 480,86 420,86.8 330,87 85,87.2" fill="#000814"/><polygon points="556,86.3 600,85 640,84.1 700,84 745,84.3 765,85 782,86.3 760,87.4 735,88 700,88.2 640,88.5 600,88" fill="#000"/><polygon points="858,86.4 907,85.4 907,88 872,87.5" fill="#000"/><rect x="7" y="414" width="123" height="1" fill="#e878d8"/><rect x="7" y="415" width="900" height="1" fill="#38b0a0"/><rect x="7" y="416" width="900" height="1" fill="#2070e0"/><rect x="7" y="417" width="900" height="6" fill="#0044ff"/><rect x="7" y="423" width="900" height="1" fill="#2864e0"/><rect x="7" y="424" width="900" height="1" fill="#6098b0"/><rect x="7" y="425" width="900" height="1" fill="#f4dcf2"/><polygon points="7,417.5 50,418 70,418.5 87,421.5 70,422.7 7,422.7" fill="#000"/><polygon points="560,421 650,420.3 665,418.8 700,418 725,418.5 745,420.8 720,422.7 665,422.7 650,422.2 560,422" fill="#000"/><polygon points="336.0,104.0 339.0,103.6 342.1,103.2 345.1,102.8 348.2,102.4 351.2,102.0 354.3,101.6 357.3,101.2 360.4,100.9 363.4,100.5 366.5,100.3 369.5,100.0 372.6,99.8 375.7,99.6 378.7,99.4 381.8,99.2 384.9,99.0 387.9,98.9 391.0,98.7 394.1,98.5 397.1,98.4 400.2,98.2 403.3,98.1 406.3,98.0 409.4,97.8 412.5,97.7 415.5,97.6 418.6,97.4 421.7,97.3 424.7,97.2 427.8,97.1 430.9,96.9 434.0,96.8 437.0,96.7 440.1,96.6 443.2,96.4 446.2,96.3 449.3,96.2 452.4,96.1 455.4,96.0 458.5,96.0 461.6,95.9 464.6,95.8 467.7,95.8 470.8,95.7 473.9,95.7 476.9,95.6 480.0,95.6 483.1,95.6 486.1,95.5 489.2,95.5 492.3,95.5 495.3,95.4 498.4,95.4 501.5,95.3 504.6,95.3 507.6,95.2 510.7,95.2 513.8,95.1 516.8,95.1 519.9,95.0 523.0,94.9 526.1,94.8 529.1,94.7 532.2,94.6 535.3,94.5 538.3,94.4 541.4,94.2 544.5,94.1 547.5,93.9 550.6,93.7 553.7,93.5 556.7,93.2 559.8,92.9 562.8,92.6 565.9,92.3 568.9,91.9 572.0,91.5 575.0,91.0 575.0,88.0 336.0,88.0" fill="#d850c8" /><polygon points="336.0,101.9 339.0,101.5 342.1,101.2 345.2,100.9 348.2,100.7 351.3,100.5 354.3,100.2 357.4,100.0 360.5,99.8 363.5,99.7 366.6,99.5 369.7,99.3 372.7,99.1 375.8,98.9 378.9,98.7 381.9,98.6 385.0,98.4 388.1,98.2 391.1,98.1 394.2,97.9 397.3,97.8 400.3,97.6 403.4,97.5 406.5,97.4 409.5,97.2 412.6,97.1 415.7,97.0 418.7,96.8 421.8,96.7 424.9,96.6 427.9,96.5 431.0,96.3 434.1,96.2 437.1,96.1 440.2,96.0 443.3,95.8 446.3,95.7 449.4,95.6 452.5,95.5 455.6,95.4 458.6,95.4 461.7,95.3 464.8,95.2 467.8,95.2 470.9,95.1 474.0,95.1 477.0,95.0 480.1,95.0 483.2,95.0 486.3,94.9 489.3,94.9 492.4,94.9 495.5,94.8 498.5,94.8 501.6,94.7 504.7,94.7 507.7,94.6 510.8,94.6 513.9,94.5 517.0,94.5 520.0,94.4 523.1,94.3 526.2,94.2 529.2,94.1 532.3,94.0 535.4,93.9 538.4,93.8 541.5,93.6 544.6,93.5 547.6,93.3 550.7,93.1 553.8,92.9 556.8,92.6 559.9,92.4 562.9,92.1 566.0,91.8 575.0,88.0 336.0,88.0" fill="#40c060" /><polygon points="336.0,100.7 339.1,100.4 342.1,100.1 345.2,99.9 348.2,99.7 351.3,99.6 354.4,99.5 357.4,99.4 360.5,99.2 363.6,99.1 366.6,99.0 369.7,98.8 372.7,98.7 375.8,98.5 378.9,98.3 381.9,98.2 385.0,98.0 388.1,97.8 391.1,97.7 394.2,97.5 397.3,97.4 400.3,97.3 403.4,97.1 406.5,97.0 409.5,96.8 412.6,96.7 415.6,96.6 418.7,96.4 421.8,96.3 424.8,96.2 427.9,96.1 431.0,95.9 434.0,95.8 437.1,95.7 440.2,95.6 443.2,95.4 446.3,95.3 449.4,95.2 452.4,95.1 455.5,95.0 458.6,95.0 461.6,94.9 464.7,94.8 467.8,94.8 470.8,94.7 473.9,94.7 477.0,94.6 480.0,94.6 483.1,94.6 486.2,94.5 489.2,94.5 492.3,94.5 495.4,94.4 498.4,94.4 501.5,94.3 504.6,94.3 507.6,94.2 510.7,94.2 513.8,94.1 516.8,94.1 519.9,94.0 523.0,93.9 526.0,93.8 529.1,93.7 532.2,93.6 535.2,93.5 538.3,93.4 541.4,93.2 544.4,93.1 547.5,92.9 550.6,92.7 553.6,92.5 556.7,92.3 559.7,92.1 562.8,91.8 565.9,91.5 568.9,91.2 572.0,90.9 575.0,90.5 575.0,88.0 336.0,88.0" fill="#0050ff" /><polygon points="336.0,405.9 339.1,406.2 342.1,406.4 345.2,406.7 348.2,406.9 351.3,407.1 354.3,407.4 357.4,407.6 360.4,407.8 363.5,408.0 366.5,408.2 369.6,408.4 372.6,408.6 375.7,408.8 378.8,409.0 381.8,409.2 384.9,409.3 387.9,409.5 391.0,409.7 394.0,409.8 397.1,410.0 400.2,410.2 403.2,410.3 406.3,410.5 409.3,410.6 412.4,410.8 415.4,410.9 418.5,411.1 421.6,411.2 424.6,411.4 427.7,411.5 430.7,411.7 433.8,411.8 436.9,412.0 439.9,412.1 443.0,412.3 446.0,412.4 449.1,412.6 452.2,412.7 455.2,412.8 458.3,412.8 461.3,412.9 464.4,413.0 467.5,413.0 470.5,413.0 473.6,413.0 476.6,413.0 479.7,413.0 482.8,413.0 485.8,413.0 488.9,413.0 492.0,413.0 495.0,413.0 498.1,413.0 501.2,413.0 504.2,413.0 507.3,413.0 510.3,413.0 513.4,413.0 516.5,413.0 519.5,413.0 522.6,413.0 525.6,413.0 528.7,413.0 531.8,413.0 534.8,413.2 537.9,413.5 540.9,413.8 544.0,414.2 547.0,414.5 547.0,418.0 336.0,418.0" fill="#d850c8" /><polygon points="336.0,407.2 339.1,407.4 342.1,407.6 345.2,407.8 348.2,408.0 351.3,408.1 354.3,408.3 357.4,408.5 360.4,408.7 363.5,408.9 366.6,409.0 369.6,409.2 372.7,409.4 375.7,409.5 378.8,409.7 381.8,409.8 384.9,410.0 388.0,410.2 391.0,410.3 394.1,410.5 397.1,410.6 400.2,410.8 403.2,410.9 406.3,411.0 409.4,411.2 412.4,411.3 415.5,411.5 418.5,411.6 421.6,411.7 424.6,411.9 427.7,412.0 430.8,412.2 433.8,412.3 436.9,412.5 439.9,412.7 443.0,412.8 446.1,413.0 449.1,413.1 452.2,413.2 455.2,413.3 458.3,413.3 461.4,413.3 464.4,413.3 467.5,413.3 470.5,413.4 473.6,413.4 476.7,413.4 479.7,413.4 482.8,413.4 485.9,413.4 488.9,413.4 492.0,413.4 495.0,413.4 498.1,413.4 501.2,413.4 504.2,413.4 507.3,413.4 510.4,413.4 513.4,413.4 516.5,413.4 519.5,413.4 522.6,413.5 525.6,413.5 528.7,413.5 531.8,413.5 534.8,413.7 537.9,414.0 540.9,414.3 544.0,414.7 547.0,415.0 547.0,418.0 336.0,418.0" fill="#40c060" /><polygon points="336.0,408.4 339.1,408.5 342.1,408.7 345.2,408.8 348.2,409.0 351.3,409.1 354.3,409.3 357.4,409.4 360.5,409.5 363.5,409.7 366.6,409.8 369.6,410.0 372.7,410.1 375.7,410.3 378.8,410.4 381.9,410.6 384.9,410.7 388.0,410.9 391.0,411.0 394.1,411.2 397.1,411.3 400.2,411.4 403.3,411.5 406.3,411.7 409.4,411.8 412.4,411.9 415.5,412.0 418.5,412.2 421.6,412.3 424.7,412.4 427.7,412.5 430.8,412.7 433.8,412.8 436.9,413.0 439.9,413.1 443.0,413.3 446.1,413.5 449.1,413.6 452.2,413.7 455.2,413.8 458.3,413.8 461.4,413.8 464.4,413.8 467.5,413.8 470.5,413.9 473.6,413.9 476.7,413.9 479.7,413.9 482.8,413.9 485.8,413.9 488.9,413.9 492.0,413.9 495.0,413.9 498.1,413.9 501.2,413.9 504.2,413.9 507.3,413.9 510.3,413.9 513.4,413.9 516.5,413.9 519.5,413.9 522.6,414.0 525.6,414.0 528.7,414.0 531.7,414.0 534.8,414.2 537.8,414.4 540.9,414.7 544.0,415.0 547.0,415.3 547.0,418.0 336.0,418.0" fill="#0050ff" /></g><g fill="#00e090" stroke="none"><polygon points="910.3,420.5 915,416.2 915,424.8"/><path d="M914.5 420.5 H919.5 V429.3 M916 429.5 H923 M917.2 431.5 H921.8 M918.4 433.5 H920.6" stroke="#00e090" stroke-width="1" fill="none"/><text x="920.5" y="427.8" font-family="Liberation Sans,sans-serif" font-weight="bold" font-size="12" fill="#00e090">4</text></g></svg>
<div class="sunk" style="left:3px;top:551px;width:14px;height:17px"></div>
<div class="btn" style="left:25px;top:550px;width:25px;height:12px;border-radius:4px"></div>
<div class="btn" style="left:25px;top:565px;width:25px;height:12px;border-radius:4px"></div>
<div class="btn" style="left:53px;top:550px;width:18px;height:27px;border-radius:4px"></div>
<div class="btn" style="left:89px;top:550px;width:25px;height:27px;border-color:#3c7fb1;background:linear-gradient(#d8ecf8 0%,#b4dcf2 48%,#88c6ea 52%,#5aa6d4 100%)"></div>
<div class="btn" style="left:116px;top:550px;width:25px;height:27px"></div>
<div class="btn" style="left:143px;top:550px;width:25px;height:27px"></div>
<div class="btn" style="left:182px;top:550px;width:25px;height:27px"></div>
<div class="btn" style="left:209px;top:550px;width:25px;height:27px"></div>
<div class="btn" style="left:237px;top:550px;width:24px;height:27px"></div>
<div class="btn" style="left:275px;top:550px;width:24px;height:27px"></div>
<div class="a" style="left:278px;top:553px;width:19px;height:20px;background:#000;color:#fff;font-size:20px;line-height:20px;text-align:center;-webkit-text-stroke:0.4px #fff;">H</div>
<div class="fld" style="left:301px;top:548px;width:101px;height:32px;background:#000;border:4px solid;border-color:#00a0a0 #00d8d8 #00e8e8 #00a8a8;color:#ffffd8;line-height:20px;padding-left:4px;">1.37 ns/</div>
<div class="btn" style="left:405px;top:549px;width:18px;height:29px"></div>
<div class="btn" style="left:425px;top:549px;width:19px;height:29px"></div>
<div class="a" style="left:449px;top:551px;width:14px;height:17px;background:#ff9010"></div>
<div class="fld" style="left:470px;top:550px;width:147px;height:29px;background:#000;color:#fff;line-height:23px;padding-left:5px;">45.4024 ns</div>
<div class="btn" style="left:621px;top:549px;width:18px;height:29px"></div>
<div class="btn" style="left:641px;top:549px;width:19px;height:29px;font-size:15px;font-weight:bold;text-align:center;line-height:27px;">0</div>
<div class="btn" style="left:662px;top:549px;width:18px;height:29px"></div>
<div class="btn" style="left:748px;top:550px;width:23px;height:27px"></div>
<div class="a" style="left:751px;top:553px;width:17px;height:20px;background:#000;color:#40e020;font-size:20px;line-height:20px;text-align:center;">T</div>
<div class="fld" style="left:776px;top:550px;width:85px;height:29px;background:#000;color:#40e020;line-height:23px;padding-left:6px;">2.500 V</div>
<div class="btn" style="left:864px;top:549px;width:26px;height:14px;border-radius:4px"></div>
<div class="btn" style="left:864px;top:565px;width:26px;height:14px;border-radius:4px"></div>
<div class="sunk" style="left:899px;top:551px;width:14px;height:17px"></div>
<svg style="left:0;top:545px" width="938" height="38" viewBox="0 545 938 38"><path d="M10.5 565 V555 M8.0 557.5 L10.5 554.5 L13.0 557.5" fill="none" stroke="#000" stroke-width="1.3"/><path d="M906.5 565 V555 M904.0 557.5 L906.5 554.5 L909.0 557.5" fill="none" stroke="#000" stroke-width="1.3"/><path d="M456.3 565 V555.5 M453.8 558.0 L456.3 555.0 L458.8 558.0" fill="none" stroke="#000" stroke-width="1.3"/><path d="M34.7 555.8 L37.5 553.2 L40.3 555.8" fill="none" stroke="#444" stroke-width="1"/><path d="M34.7 558.3 L37.5 555.7 L40.3 558.3" fill="none" stroke="#444" stroke-width="1"/><path d="M34.7 568.2 L37.5 570.8 L40.3 568.2" fill="none" stroke="#444" stroke-width="1"/><path d="M34.7 570.7 L37.5 573.3 L40.3 570.7" fill="none" stroke="#444" stroke-width="1"/><path d="M59.2 556.8 L62 554.2 L64.8 556.8" fill="none" stroke="#444" stroke-width="1"/><path d="M59.2 559.3 L62 556.7 L64.8 559.3" fill="none" stroke="#444" stroke-width="1"/><path d="M59.2 566.7 L62 569.3 L64.8 566.7" fill="none" stroke="#444" stroke-width="1"/><path d="M59.2 569.2 L62 571.8 L64.8 569.2" fill="none" stroke="#444" stroke-width="1"/><polygon points="98.2,556.0 104.8,556.0 109.5,560.7 109.5,567.3 104.8,572.0 98.2,572.0 93.5,567.3 93.5,560.7" fill="#10a8a8" stroke="#000" stroke-width="1"/><polygon points="125.2,556.0 131.8,556.0 136.5,560.7 136.5,567.3 131.8,572.0 125.2,572.0 120.5,567.3 120.5,560.7" fill="#ff0000" stroke="#000" stroke-width="1"/><polygon points="152.2,556.0 158.8,556.0 163.5,560.7 163.5,567.3 158.8,572.0 152.2,572.0 147.5,567.3 147.5,560.7" fill="#ffff00" stroke="#000" stroke-width="1"/><rect x="185" y="554.6" width="18.4" height="16.8" rx="1.2" fill="#fff" stroke="#000" stroke-width="1.5"/><polygon points="202.7,563.2 202.7,570.7 194.6,570.7" fill="#808080"/><path d="M187 561 C188.5 557.2 192.5 556.8 196.3 560.6" fill="none" stroke="#000" stroke-width="1.1"/><polygon points="199.6,558.3 199.6,563.8 194.4,562.6" fill="#000"/><polygon points="219.5,559.5 224.5,555.6 231,557.8 226.5,562" fill="#fff" stroke="#444" stroke-width="0.8"/><polygon points="212.5,564 221.5,568 221.5,572.6 212.5,568.6" fill="#a8a8a8"/><polygon points="221.5,568 231,562 231,566.8 221.5,572.6" fill="#686868"/><polygon points="212.5,564 222,558.8 231,562 221.5,568" fill="#c4c4c4" stroke="#666" stroke-width="0.5"/><path d="M215.5 564 L221.8 566.6 M218 562.6 L224 565.2" stroke="#f4f4f4" stroke-width="1"/><path d="M212.5 569 L221.5 573 L231 567.2 M212.5 567 L221.5 571 L231 565.2" fill="none" stroke="#2c2c2c" stroke-width="0.9"/><circle cx="248.5" cy="563.3" r="4.3" fill="#ffff00" stroke="#222" stroke-width="0.9"/><path d="M248.5 553.8 V558.2 M248.5 568.4 V572.8 M239.2 563.3 H243.6 M253.4 563.3 H257.8 M241.2 556 L244.8 559.6 M252.2 567 L255.8 570.6 M241.2 570.6 L244.8 567 M252.2 559.6 L255.8 556" stroke="#111" stroke-width="1.2"/><path d="M411 564 C411 557.5 413.5 557.5 413.5 563.5 C413.5 570 416 570 416 563.5" fill="none" stroke="#000" stroke-width="1.1"/><path d="M429.5 564.5 C430.5 558.5 433 558.5 434.5 563.5 C436 569 438.5 569 439.5 563.5" fill="none" stroke="#000" stroke-width="1.1"/><polygon points="633,557.5 633,569.5 626.5,563.5" fill="#000"/><polygon points="668,557.5 668,569.5 674.5,563.5" fill="#000"/><polygon points="871,559.5 883,559.5 877,553" fill="#000"/><polygon points="871,569 883,569 877,575.5" fill="#000"/></svg>
</body></html>
